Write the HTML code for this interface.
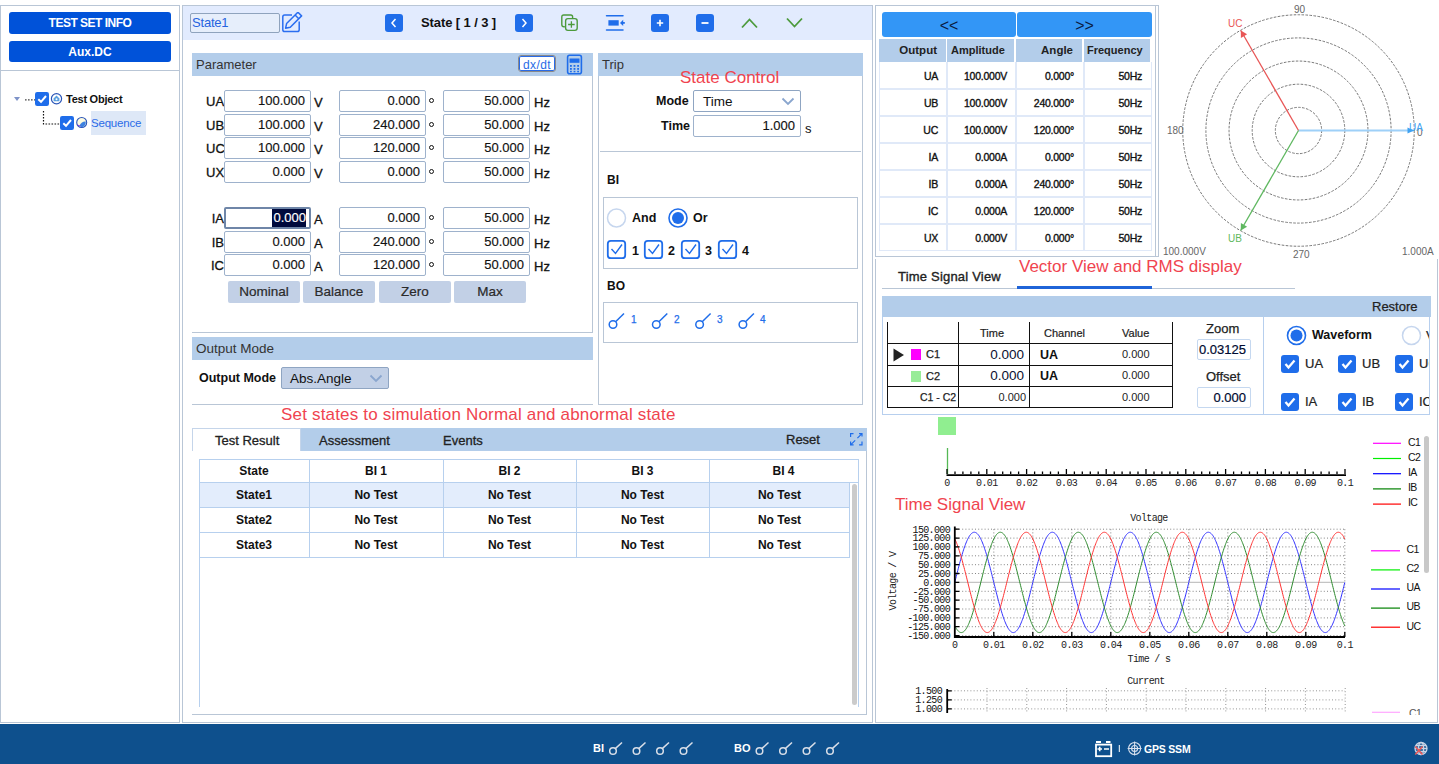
<!DOCTYPE html>
<html><head><meta charset="utf-8">
<style>
*{box-sizing:border-box;margin:0;padding:0}
html,body{width:1439px;height:764px;overflow:hidden;background:#fff}
body{position:relative;font-family:"Liberation Sans",sans-serif;color:#111;font-size:13px}
.a{position:absolute}
.t{position:absolute;white-space:nowrap;line-height:1}
.b{font-weight:bold}
.bd{position:absolute;border:1px solid #B9C6D6}
.hdr{position:absolute;background:#B3CDEA;}
.inp{position:absolute;background:#fff;border:1px solid #9EB2CC;border-radius:2px;text-align:right;white-space:nowrap;line-height:19px;padding-right:5px;font-size:13px;-webkit-text-stroke:0.15px}
.btnb{position:absolute;background:#0052D9;border-radius:3px;color:#fff;font-weight:bold;text-align:center;font-size:12px}
.red{position:absolute;white-space:nowrap;line-height:1;color:#F0444F;font-size:17px}
.sq{position:absolute;border-radius:3px}
</style></head><body>
<!-- LEFT PANEL -->
<div class="bd" style="left:0;top:5px;width:180px;height:718px"></div>
<div class="btnb" style="left:9px;top:12px;width:162px;height:22px;line-height:22px;letter-spacing:-0.5px">TEST SET INFO</div>
<div class="btnb" style="left:9px;top:41px;width:162px;height:21px;line-height:23px">Aux.DC</div>
<div class="a" style="left:1px;top:70px;width:178px;height:1px;background:#B9C6D6"></div>
<!-- tree -->
<svg class="a" style="left:0;top:85px" width="180" height="55">
 <path d="M14 12 L20 12 L17 16 Z" fill="#7E93C8"/>
 <path d="M25 14.8 H35" stroke="#444" stroke-width="1.3" stroke-dasharray="1.6,1.4"/>
 <path d="M43.5 26 V39 H60" stroke="#111" stroke-width="1.2" fill="none" stroke-dasharray="1.6,1.4"/>
 <rect x="35" y="7" width="14" height="14" rx="2.2" fill="#1F6DEA"/>
 <path d="M38.3 14.2 L41 16.8 L46 11" stroke="#fff" stroke-width="2" fill="none"/>
 <circle cx="56.5" cy="13.7" r="5.1" fill="#fff" stroke="#2A55B8" stroke-width="1.2"/>
 <path d="M53.6 16.3 V13.4 L56.5 10.6 L59.4 13.4 V16.3 Z" fill="#5AA0E0"/>
 <circle cx="56.5" cy="14.2" r="1" fill="#fff"/>
 <rect x="60" y="31" width="14" height="14" rx="2.2" fill="#1F6DEA"/>
 <path d="M63.3 38.2 L66 40.8 L71 35" stroke="#fff" stroke-width="2" fill="none"/>
 <circle cx="81.7" cy="37.5" r="5" fill="#FDFBE0" stroke="#2A55B8" stroke-width="1.1"/>
 <path d="M79.5 40.5 Q82 36 85.8 36.5 Q86 41 82 42.3 Q80.5 42 79.5 40.5Z" fill="#3D82E0"/>
 <path d="M77.5 39.8 Q79 41 80.5 41.2" stroke="#8040E0" stroke-width="1" fill="none"/>
</svg>
<div class="t b" style="left:66px;top:94px;font-size:11px;letter-spacing:-0.25px;color:#111">Test Object</div>
<div class="a" style="left:91px;top:111px;width:55px;height:24px;background:#DEE8F7"></div>
<div class="t" style="left:91px;top:118px;font-size:11.5px;letter-spacing:-0.2px;color:#2B6BE8">Sequence</div>
<!-- MIDDLE PANEL -->
<div class="bd" style="left:182px;top:5px;width:691px;height:718px"></div>
<div class="a" style="left:183px;top:6px;width:689px;height:34px;background:#E2EBFE"></div>
<div class="a" style="left:190px;top:13px;width:90px;height:20px;border:1px solid #8FA3BD;border-radius:2px;background:#E6EEFB"></div>
<div class="t" style="left:192px;top:16px;font-size:13px;color:#2563E0;letter-spacing:-0.2px">State1</div>
<svg class="a" style="left:282px;top:12px" width="22" height="22">
 <path d="M10 3.1 H2.6 Q0.8 3.1 0.8 4.9 V17.8 Q0.8 19.6 2.6 19.6 H15.4 Q17.2 19.6 17.2 17.8 V9.6" fill="none" stroke="#2A6EF0" stroke-width="1.5"/>
 <g transform="translate(3.6,16.2) rotate(-45)" fill="none" stroke="#2A6EF0" stroke-width="1.5" stroke-linejoin="round">
  <path d="M0 0 L4 -2.6 H20 V2.6 H4 Z"/><path d="M16 -2.6 V2.6"/>
 </g>
</svg>
<!-- nav -->
<div class="sq" style="left:385px;top:14px;width:18px;height:18px;background:#1F6DEA"></div>
<svg class="a" style="left:385px;top:14px" width="18" height="18"><path d="M10.5 5 L7 9 L10.5 13" stroke="#fff" stroke-width="1.5" fill="none"/></svg>
<div class="t b" style="left:421px;top:16px;font-size:13px;color:#111;letter-spacing:-0.1px">State [ 1 / 3 ]</div>
<div class="sq" style="left:515px;top:14px;width:18px;height:18px;background:#1F6DEA"></div>
<svg class="a" style="left:515px;top:14px" width="18" height="18"><path d="M7.5 5 L11 9 L7.5 13" stroke="#fff" stroke-width="1.5" fill="none"/></svg>
<svg class="a" style="left:559px;top:13px" width="22" height="20">
 <path d="M5.8 13.7 H5 Q2.8 13.7 2.8 11.5 V4 Q2.8 2 4.8 2 H11.8 Q13.6 2 13.6 3.8 V5" fill="none" stroke="#4C9A3C" stroke-width="1.4"/>
 <rect x="6.6" y="5.6" width="11.6" height="11.8" rx="2.3" fill="none" stroke="#4C9A3C" stroke-width="1.4"/>
 <path d="M12.4 8.2 V14.8 M9.1 11.5 H15.7" stroke="#4C9A3C" stroke-width="1.3"/>
</svg>
<svg class="a" style="left:605px;top:14px" width="22" height="18">
 <path d="M1.5 1.7 H18 M1.5 15.9 H18" stroke="#1F6DEA" stroke-width="1.5" stroke-linecap="round"/>
 <rect x="3.4" y="6.2" width="10.3" height="5.4" fill="#1F6DEA"/>
 <path d="M15 8.9 L18.2 5.8 V12 Z" fill="#1F6DEA"/><path d="M17 8.9 H19.8" stroke="#1F6DEA" stroke-width="1.8"/>
</svg>
<div class="sq" style="left:651px;top:14px;width:18px;height:18px;background:#1F6DEA"></div>
<svg class="a" style="left:651px;top:14px" width="18" height="18"><path d="M9 5.8 V12.2 M5.8 9 H12.2" stroke="#fff" stroke-width="1.6"/></svg>
<div class="sq" style="left:696px;top:14px;width:18px;height:18px;background:#1F6DEA"></div>
<svg class="a" style="left:696px;top:14px" width="18" height="18"><path d="M5.5 9 H12.5" stroke="#fff" stroke-width="1.8"/></svg>
<svg class="a" style="left:740px;top:16px" width="20" height="14"><path d="M2 11.5 L9.5 3.5 L17 11.5" stroke="#4C9A3C" stroke-width="1.8" fill="none"/></svg>
<svg class="a" style="left:785px;top:16px" width="20" height="14"><path d="M2 2.5 L9.5 10.5 L17 2.5" stroke="#4C9A3C" stroke-width="1.8" fill="none"/></svg>

<!-- Parameter panel -->
<div class="hdr" style="left:192px;top:53px;width:401px;height:23px"></div>
<div class="t" style="left:196px;top:58px;font-size:13px;color:#333">Parameter</div>
<div class="a" style="left:518px;top:55px;width:38px;height:17px;border:1.5px solid #8A8A8A;border-radius:3px;background:#fff;box-shadow:inset 0 0 0 1px #2A6BE6"></div>
<div class="t" style="left:523px;top:59px;font-size:12px;letter-spacing:0.4px;color:#2A6BE6">dx/dt</div>
<svg class="a" style="left:566px;top:54px" width="17" height="21">
 <rect x="1.6" y="1.2" width="13.8" height="18.6" rx="2" fill="none" stroke="#1F6DEA" stroke-width="1.6"/>
 <rect x="3.5" y="4.5" width="10" height="4.3" fill="#1F6DEA"/>
 <g fill="#1F6DEA"><rect x="4" y="11" width="1.8" height="1.8"/><rect x="7.6" y="11" width="1.8" height="1.8"/><rect x="11.2" y="11" width="1.8" height="1.8"/>
 <rect x="4" y="14" width="1.8" height="1.8"/><rect x="7.6" y="14" width="1.8" height="1.8"/><rect x="11.2" y="14" width="1.8" height="1.8"/>
 <rect x="4" y="16.8" width="1.8" height="1.5"/><rect x="7.6" y="16.8" width="1.8" height="1.5"/><rect x="11.2" y="16.8" width="1.8" height="1.5"/></g>
</svg>
<div class="a" style="left:592px;top:76px;width:1px;height:257px;background:#B9C6D6"></div>
<div class="a" style="left:192px;top:332px;width:401px;height:1px;background:#B9C6D6"></div>
<div class="t" style="left:206px;top:95px;width:18px;text-align:right;font-size:13px;-webkit-text-stroke:0.3px">UA</div>
<div class="inp" style="left:224px;top:90px;width:87px;height:22px">100.000</div>
<div class="t" style="left:314px;top:96px;font-size:13px;-webkit-text-stroke:0.3px">V</div>
<div class="inp" style="left:339px;top:90px;width:87px;height:22px">0.000</div>
<div class="a" style="left:429px;top:98px;width:5px;height:5px;border:1.7px solid #111;border-radius:50%"></div>
<div class="inp" style="left:443px;top:90px;width:87px;height:22px">50.000</div>
<div class="t" style="left:534px;top:96px;font-size:13px;-webkit-text-stroke:0.3px">Hz</div>
<div class="t" style="left:206px;top:119px;width:18px;text-align:right;font-size:13px;-webkit-text-stroke:0.3px">UB</div>
<div class="inp" style="left:224px;top:114px;width:87px;height:22px">100.000</div>
<div class="t" style="left:314px;top:120px;font-size:13px;-webkit-text-stroke:0.3px">V</div>
<div class="inp" style="left:339px;top:114px;width:87px;height:22px">240.000</div>
<div class="a" style="left:429px;top:122px;width:5px;height:5px;border:1.7px solid #111;border-radius:50%"></div>
<div class="inp" style="left:443px;top:114px;width:87px;height:22px">50.000</div>
<div class="t" style="left:534px;top:120px;font-size:13px;-webkit-text-stroke:0.3px">Hz</div>
<div class="t" style="left:206px;top:142px;width:18px;text-align:right;font-size:13px;-webkit-text-stroke:0.3px">UC</div>
<div class="inp" style="left:224px;top:137px;width:87px;height:22px">100.000</div>
<div class="t" style="left:314px;top:143px;font-size:13px;-webkit-text-stroke:0.3px">V</div>
<div class="inp" style="left:339px;top:137px;width:87px;height:22px">120.000</div>
<div class="a" style="left:429px;top:145px;width:5px;height:5px;border:1.7px solid #111;border-radius:50%"></div>
<div class="inp" style="left:443px;top:137px;width:87px;height:22px">50.000</div>
<div class="t" style="left:534px;top:143px;font-size:13px;-webkit-text-stroke:0.3px">Hz</div>
<div class="t" style="left:206px;top:166px;width:18px;text-align:right;font-size:13px;-webkit-text-stroke:0.3px">UX</div>
<div class="inp" style="left:224px;top:161px;width:87px;height:22px">0.000</div>
<div class="t" style="left:314px;top:167px;font-size:13px;-webkit-text-stroke:0.3px">V</div>
<div class="inp" style="left:339px;top:161px;width:87px;height:22px">0.000</div>
<div class="a" style="left:429px;top:169px;width:5px;height:5px;border:1.7px solid #111;border-radius:50%"></div>
<div class="inp" style="left:443px;top:161px;width:87px;height:22px">50.000</div>
<div class="t" style="left:534px;top:167px;font-size:13px;-webkit-text-stroke:0.3px">Hz</div>
<div class="t" style="left:211px;top:212px;width:13px;text-align:right;font-size:13px;-webkit-text-stroke:0.3px">IA</div>
<div class="inp" style="left:224px;top:207px;width:87px;height:22px;border:2px solid #6F86A8;line-height:18px;padding-right:3px"><span style="background:#000A3C;color:#fff;padding:1px 0 2px 1px">0.000</span></div>
<div class="t" style="left:314px;top:213px;font-size:13px;-webkit-text-stroke:0.3px">A</div>
<div class="inp" style="left:339px;top:207px;width:87px;height:22px">0.000</div>
<div class="a" style="left:429px;top:215px;width:5px;height:5px;border:1.7px solid #111;border-radius:50%"></div>
<div class="inp" style="left:443px;top:207px;width:87px;height:22px">50.000</div>
<div class="t" style="left:534px;top:213px;font-size:13px;-webkit-text-stroke:0.3px">Hz</div>
<div class="t" style="left:211px;top:236px;width:13px;text-align:right;font-size:13px;-webkit-text-stroke:0.3px">IB</div>
<div class="inp" style="left:224px;top:231px;width:87px;height:22px">0.000</div>
<div class="t" style="left:314px;top:237px;font-size:13px;-webkit-text-stroke:0.3px">A</div>
<div class="inp" style="left:339px;top:231px;width:87px;height:22px">240.000</div>
<div class="a" style="left:429px;top:239px;width:5px;height:5px;border:1.7px solid #111;border-radius:50%"></div>
<div class="inp" style="left:443px;top:231px;width:87px;height:22px">50.000</div>
<div class="t" style="left:534px;top:237px;font-size:13px;-webkit-text-stroke:0.3px">Hz</div>
<div class="t" style="left:211px;top:259px;width:13px;text-align:right;font-size:13px;-webkit-text-stroke:0.3px">IC</div>
<div class="inp" style="left:224px;top:254px;width:87px;height:22px">0.000</div>
<div class="t" style="left:314px;top:260px;font-size:13px;-webkit-text-stroke:0.3px">A</div>
<div class="inp" style="left:339px;top:254px;width:87px;height:22px">120.000</div>
<div class="a" style="left:429px;top:262px;width:5px;height:5px;border:1.7px solid #111;border-radius:50%"></div>
<div class="inp" style="left:443px;top:254px;width:87px;height:22px">50.000</div>
<div class="t" style="left:534px;top:260px;font-size:13px;-webkit-text-stroke:0.3px">Hz</div>
<div class="a" style="left:228px;top:281px;width:72px;height:22px;background:#C2D0E6;border-radius:2px;text-align:center;line-height:22px;font-size:13.5px;color:#2a2a2a;-webkit-text-stroke:0.2px">Nominal</div>
<div class="a" style="left:303px;top:281px;width:72px;height:22px;background:#C2D0E6;border-radius:2px;text-align:center;line-height:22px;font-size:13.5px;color:#2a2a2a;-webkit-text-stroke:0.2px">Balance</div>
<div class="a" style="left:379px;top:281px;width:72px;height:22px;background:#C2D0E6;border-radius:2px;text-align:center;line-height:22px;font-size:13.5px;color:#2a2a2a;-webkit-text-stroke:0.2px">Zero</div>
<div class="a" style="left:454px;top:281px;width:72px;height:22px;background:#C2D0E6;border-radius:2px;text-align:center;line-height:22px;font-size:13.5px;color:#2a2a2a;-webkit-text-stroke:0.2px">Max</div>
<div class="hdr" style="left:192px;top:337px;width:401px;height:23px"></div>
<div class="t" style="left:196px;top:342px;font-size:13.5px;color:#333">Output Mode</div>
<div class="t b" style="left:199px;top:372px;font-size:12.5px">Output Mode</div>
<div class="a" style="left:281px;top:367px;width:108px;height:22px;background:#C2D0E6;border:1px solid #8FA5C2;border-radius:2px"></div>
<div class="t" style="left:290px;top:372px;font-size:13.5px;color:#111">Abs.Angle</div>
<svg class="a" style="left:369px;top:373px" width="14" height="10"><path d="M1.5 2.5 L7 8 L12.5 2.5" stroke="#8AA6CE" stroke-width="1.8" fill="none"/></svg>
<div class="a" style="left:192px;top:404px;width:401px;height:1px;background:#B9C6D6"></div>
<!-- Trip -->
<div class="hdr" style="left:598px;top:53px;width:265px;height:23px"></div>
<div class="t" style="left:602px;top:58px;font-size:13px;color:#333">Trip</div>
<div class="a" style="left:598px;top:76px;width:1px;height:329px;background:#B9C6D6"></div>
<div class="a" style="left:862px;top:76px;width:1px;height:329px;background:#B9C6D6"></div>
<div class="a" style="left:598px;top:404px;width:265px;height:1px;background:#B9C6D6"></div>
<div class="red" style="left:680px;top:69px">State Control</div>
<div class="t b" style="left:656px;top:95px;font-size:12.5px">Mode</div>
<div class="a" style="left:693px;top:90px;width:108px;height:22px;border:1px solid #8FA5C2;border-radius:2px;background:#fff"></div>
<div class="t" style="left:703px;top:95px;font-size:13.5px">Time</div>
<svg class="a" style="left:781px;top:96px" width="14" height="10"><path d="M1.5 2.5 L7 8 L12.5 2.5" stroke="#8AA6CE" stroke-width="1.8" fill="none"/></svg>
<div class="t b" style="left:661px;top:120px;font-size:12.5px">Time</div>
<div class="inp" style="left:693px;top:115px;width:108px;height:22px">1.000</div>
<div class="t" style="left:805px;top:122px;font-size:13px">s</div>
<div class="a" style="left:600px;top:151px;width:261px;height:1px;background:#B9C6D6"></div>
<div class="t b" style="left:607px;top:174px;font-size:12px">BI</div>
<div class="a" style="left:603px;top:197px;width:255px;height:72px;border:1px solid #B9C6D6"></div>
<svg class="a" style="left:603px;top:197px" width="255" height="72">
 <circle cx="13.5" cy="21" r="9" fill="#fff" stroke="#C6D6EE" stroke-width="1.5"/>
 <circle cx="75" cy="21" r="9" fill="#fff" stroke="#1F6DEA" stroke-width="1.6"/>
 <circle cx="75" cy="21" r="6" fill="#1F6DEA"/>
 <g fill="none" stroke="#1F6DEA" stroke-width="1.8">
  <rect x="4.8" y="43.8" width="17.4" height="17.4" rx="3"/>
  <rect x="41.8" y="43.8" width="17.4" height="17.4" rx="3"/>
  <rect x="78.8" y="43.8" width="17.4" height="17.4" rx="3"/>
  <rect x="115.8" y="43.8" width="17.4" height="17.4" rx="3"/>
 </g>
 <g fill="none" stroke="#1F6DEA" stroke-width="1.4">
  <path d="M8.5 52 L12.5 56.5 L19 47.5"/>
  <path d="M45.5 52 L49.5 56.5 L56 47.5"/>
  <path d="M82.5 52 L86.5 56.5 L93 47.5"/>
  <path d="M119.5 52 L123.5 56.5 L130 47.5"/>
 </g>
</svg>
<div class="t b" style="left:632px;top:212px;font-size:12.5px">And</div>
<div class="t b" style="left:693px;top:212px;font-size:12.5px">Or</div>
<div class="t b" style="left:632px;top:245px;font-size:12.5px">1</div>
<div class="t b" style="left:668px;top:245px;font-size:12.5px">2</div>
<div class="t b" style="left:705px;top:245px;font-size:12.5px">3</div>
<div class="t b" style="left:742px;top:245px;font-size:12.5px">4</div>
<div class="t b" style="left:607px;top:280px;font-size:12px">BO</div>
<div class="a" style="left:603px;top:302px;width:255px;height:41px;border:1px solid #B9C6D6"></div>
<svg class="a" style="left:603px;top:302px" width="160" height="41">
 <g fill="none" stroke="#1F6DEA" stroke-width="1.5">
  <circle cx="10" cy="22.5" r="3.8"/><path d="M12.6 19.7 L21 11.5"/>
  <circle cx="53.3" cy="22.5" r="3.8"/><path d="M55.9 19.7 L64.3 11.5"/>
  <circle cx="96.6" cy="22.5" r="3.8"/><path d="M99.2 19.7 L107.6 11.5"/>
  <circle cx="139.9" cy="22.5" r="3.8"/><path d="M142.5 19.7 L150.9 11.5"/>
 </g>
</svg>
<div class="t" style="left:631px;top:315px;font-size:10px;color:#1F6DEA;-webkit-text-stroke:0.25px">1</div>
<div class="t" style="left:674px;top:315px;font-size:10px;color:#1F6DEA;-webkit-text-stroke:0.25px">2</div>
<div class="t" style="left:717px;top:315px;font-size:10px;color:#1F6DEA;-webkit-text-stroke:0.25px">3</div>
<div class="t" style="left:760px;top:315px;font-size:10px;color:#1F6DEA;-webkit-text-stroke:0.25px">4</div>
<div class="red" style="left:281px;top:406px;letter-spacing:0.18px">Set states to simulation Normal and abnormal state</div>
<div class="hdr" style="left:192px;top:428px;width:675px;height:23px"></div>
<div class="a" style="left:192px;top:428px;width:109px;height:23px;background:#fff;border:1px solid #C5D5EA;border-bottom:none"></div>
<div class="t" style="left:215px;top:434px;font-size:13px;color:#222;-webkit-text-stroke:0.3px">Test Result</div>
<div class="t" style="left:319px;top:434px;font-size:13px;color:#222;-webkit-text-stroke:0.3px">Assessment</div>
<div class="t" style="left:443px;top:434px;font-size:13px;color:#222;-webkit-text-stroke:0.3px">Events</div>
<div class="t" style="left:786px;top:433px;font-size:13px;color:#222;-webkit-text-stroke:0.3px">Reset</div>
<svg class="a" style="left:849px;top:432px" width="15" height="15"><g fill="none" stroke="#1F6DEA" stroke-width="1.2">
<path d="M1.6 5 V1.6 H4.5"/><path d="M13 9.6 V12.9 H10.1"/><path d="M1.6 9.6 V12.9 H4.6 M1.6 12.9 L6.2 8.3"/><path d="M10 1.6 H13 V4.6 M13 1.6 L8.4 6.2"/></g></svg>
<div class="a" style="left:866px;top:451px;width:1px;height:264px;background:#B9C6D6"></div>
<div class="a" style="left:192px;top:714px;width:675px;height:1px;background:#B9C6D6"></div>
<div class="a" style="left:200px;top:483px;width:650px;height:24px;background:#E3EDFC"></div>
<div class="a" style="left:199px;top:459px;width:1px;height:248px;background:#B7D0EE"></div>
<div class="a" style="left:199px;top:459px;width:660px;height:1px;background:#B7D0EE"></div>
<div class="a" style="left:858px;top:459px;width:1px;height:248px;background:#B7D0EE"></div>
<div class="a" style="left:199px;top:482px;width:660px;height:1px;background:#B7D0EE"></div>
<div class="a" style="left:199px;top:507px;width:651px;height:1px;background:#B7D0EE"></div>
<div class="a" style="left:199px;top:532px;width:651px;height:1px;background:#B7D0EE"></div>
<div class="a" style="left:199px;top:557px;width:651px;height:1px;background:#B7D0EE"></div>
<div class="a" style="left:309px;top:459px;width:1px;height:99px;background:#B7D0EE"></div>
<div class="a" style="left:443px;top:459px;width:1px;height:99px;background:#B7D0EE"></div>
<div class="a" style="left:576px;top:459px;width:1px;height:99px;background:#B7D0EE"></div>
<div class="a" style="left:709px;top:459px;width:1px;height:99px;background:#B7D0EE"></div>
<div class="a" style="left:852px;top:484px;width:5px;height:221px;background:#CBCBCB;border-radius:3px"></div>
<div class="a" style="left:849px;top:482px;width:1px;height:76px;background:#B7D0EE"></div>
<div class="t b" style="left:199px;width:110px;text-align:center;top:465px;font-size:12px">State</div>
<div class="t b" style="left:309px;width:134px;text-align:center;top:465px;font-size:12px">BI 1</div>
<div class="t b" style="left:443px;width:133px;text-align:center;top:465px;font-size:12px">BI 2</div>
<div class="t b" style="left:576px;width:133px;text-align:center;top:465px;font-size:12px">BI 3</div>
<div class="t b" style="left:709px;width:149px;text-align:center;top:465px;font-size:12px">BI 4</div>
<div class="t b" style="left:199px;width:110px;text-align:center;top:489px;font-size:12px">State1</div>
<div class="t b" style="left:309px;width:134px;text-align:center;top:489px;font-size:12px">No Test</div>
<div class="t b" style="left:443px;width:133px;text-align:center;top:489px;font-size:12px">No Test</div>
<div class="t b" style="left:576px;width:133px;text-align:center;top:489px;font-size:12px">No Test</div>
<div class="t b" style="left:709px;width:141px;text-align:center;top:489px;font-size:12px">No Test</div>
<div class="t b" style="left:199px;width:110px;text-align:center;top:514px;font-size:12px">State2</div>
<div class="t b" style="left:309px;width:134px;text-align:center;top:514px;font-size:12px">No Test</div>
<div class="t b" style="left:443px;width:133px;text-align:center;top:514px;font-size:12px">No Test</div>
<div class="t b" style="left:576px;width:133px;text-align:center;top:514px;font-size:12px">No Test</div>
<div class="t b" style="left:709px;width:141px;text-align:center;top:514px;font-size:12px">No Test</div>
<div class="t b" style="left:199px;width:110px;text-align:center;top:539px;font-size:12px">State3</div>
<div class="t b" style="left:309px;width:134px;text-align:center;top:539px;font-size:12px">No Test</div>
<div class="t b" style="left:443px;width:133px;text-align:center;top:539px;font-size:12px">No Test</div>
<div class="t b" style="left:576px;width:133px;text-align:center;top:539px;font-size:12px">No Test</div>
<div class="t b" style="left:709px;width:141px;text-align:center;top:539px;font-size:12px">No Test</div>
<div class="bd" style="left:875px;top:5px;width:284px;height:252px;border-right:none"></div>
<div class="bd" style="left:875px;top:259px;width:563px;height:464px;border-top:none"></div>
<div class="a" style="left:1155px;top:5px;width:1px;height:251px;background:#B9C6D6"></div>
<div class="a" style="left:1158px;top:5px;width:1px;height:252px;background:#B9C6D6"></div>
<div class="a" style="left:875px;top:256px;width:284px;height:1px;background:#B9C6D6"></div>
<div class="a" style="left:882px;top:12px;width:134px;height:25px;background:#3396F6;border-radius:3px;text-align:center;line-height:27px;font-size:16px;color:#0A1A40">&lt;&lt;</div>
<div class="a" style="left:1017px;top:12px;width:135px;height:25px;background:#3396F6;border-radius:3px;text-align:center;line-height:27px;font-size:16px;color:#0A1A40">&gt;&gt;</div>
<div class="a" style="left:879px;top:39px;width:67px;height:23px;background:#B3CDEA"></div>
<div class="a" style="left:947px;top:39px;width:67px;height:23px;background:#B3CDEA"></div>
<div class="a" style="left:1016px;top:39px;width:66px;height:23px;background:#B3CDEA"></div>
<div class="a" style="left:1084px;top:39px;width:66px;height:23px;background:#B3CDEA"></div>
<div class="t b" style="left:879px;width:58px;text-align:right;top:45px;font-size:11.5px;color:#222">Output</div>
<div class="t b" style="left:951px;top:45px;font-size:11px;color:#222">Amplitude</div>
<div class="t b" style="left:1016px;width:57px;text-align:right;top:45px;font-size:11.5px;color:#222">Angle</div>
<div class="t b" style="left:1087px;top:45px;font-size:11px;color:#222">Frequency</div>
<div class="a" style="left:879px;top:62px;width:273px;height:189px;border:1px solid #E0E9F8;border-top:none"></div>
<div class="a" style="left:946px;top:62px;width:2px;height:189px;background:#E0E9F8"></div>
<div class="a" style="left:1015px;top:62px;width:2px;height:189px;background:#E0E9F8"></div>
<div class="a" style="left:1083px;top:62px;width:2px;height:189px;background:#E0E9F8"></div>
<div class="t" style="left:880px;width:58px;text-align:right;top:71px;font-size:10.5px;letter-spacing:-0.25px;-webkit-text-stroke:0.35px;color:#111">UA</div>
<div class="t" style="left:948px;width:59px;text-align:right;top:71px;font-size:10.5px;letter-spacing:-0.25px;-webkit-text-stroke:0.35px;color:#111">100.000V</div>
<div class="t" style="left:1016px;width:58px;text-align:right;top:71px;font-size:10.5px;letter-spacing:-0.25px;-webkit-text-stroke:0.35px;color:#111">0.000°</div>
<div class="t" style="left:1084px;width:58px;text-align:right;top:71px;font-size:10.5px;letter-spacing:-0.25px;-webkit-text-stroke:0.35px;color:#111">50Hz</div>
<div class="a" style="left:879px;top:88px;width:273px;height:2px;background:#E0E9F8"></div>
<div class="t" style="left:880px;width:58px;text-align:right;top:98px;font-size:10.5px;letter-spacing:-0.25px;-webkit-text-stroke:0.35px;color:#111">UB</div>
<div class="t" style="left:948px;width:59px;text-align:right;top:98px;font-size:10.5px;letter-spacing:-0.25px;-webkit-text-stroke:0.35px;color:#111">100.000V</div>
<div class="t" style="left:1016px;width:58px;text-align:right;top:98px;font-size:10.5px;letter-spacing:-0.25px;-webkit-text-stroke:0.35px;color:#111">240.000°</div>
<div class="t" style="left:1084px;width:58px;text-align:right;top:98px;font-size:10.5px;letter-spacing:-0.25px;-webkit-text-stroke:0.35px;color:#111">50Hz</div>
<div class="a" style="left:879px;top:115px;width:273px;height:2px;background:#E0E9F8"></div>
<div class="t" style="left:880px;width:58px;text-align:right;top:125px;font-size:10.5px;letter-spacing:-0.25px;-webkit-text-stroke:0.35px;color:#111">UC</div>
<div class="t" style="left:948px;width:59px;text-align:right;top:125px;font-size:10.5px;letter-spacing:-0.25px;-webkit-text-stroke:0.35px;color:#111">100.000V</div>
<div class="t" style="left:1016px;width:58px;text-align:right;top:125px;font-size:10.5px;letter-spacing:-0.25px;-webkit-text-stroke:0.35px;color:#111">120.000°</div>
<div class="t" style="left:1084px;width:58px;text-align:right;top:125px;font-size:10.5px;letter-spacing:-0.25px;-webkit-text-stroke:0.35px;color:#111">50Hz</div>
<div class="a" style="left:879px;top:142px;width:273px;height:2px;background:#E0E9F8"></div>
<div class="t" style="left:880px;width:58px;text-align:right;top:152px;font-size:10.5px;letter-spacing:-0.25px;-webkit-text-stroke:0.35px;color:#111">IA</div>
<div class="t" style="left:948px;width:59px;text-align:right;top:152px;font-size:10.5px;letter-spacing:-0.25px;-webkit-text-stroke:0.35px;color:#111">0.000A</div>
<div class="t" style="left:1016px;width:58px;text-align:right;top:152px;font-size:10.5px;letter-spacing:-0.25px;-webkit-text-stroke:0.35px;color:#111">0.000°</div>
<div class="t" style="left:1084px;width:58px;text-align:right;top:152px;font-size:10.5px;letter-spacing:-0.25px;-webkit-text-stroke:0.35px;color:#111">50Hz</div>
<div class="a" style="left:879px;top:169px;width:273px;height:2px;background:#E0E9F8"></div>
<div class="t" style="left:880px;width:58px;text-align:right;top:179px;font-size:10.5px;letter-spacing:-0.25px;-webkit-text-stroke:0.35px;color:#111">IB</div>
<div class="t" style="left:948px;width:59px;text-align:right;top:179px;font-size:10.5px;letter-spacing:-0.25px;-webkit-text-stroke:0.35px;color:#111">0.000A</div>
<div class="t" style="left:1016px;width:58px;text-align:right;top:179px;font-size:10.5px;letter-spacing:-0.25px;-webkit-text-stroke:0.35px;color:#111">240.000°</div>
<div class="t" style="left:1084px;width:58px;text-align:right;top:179px;font-size:10.5px;letter-spacing:-0.25px;-webkit-text-stroke:0.35px;color:#111">50Hz</div>
<div class="a" style="left:879px;top:196px;width:273px;height:2px;background:#E0E9F8"></div>
<div class="t" style="left:880px;width:58px;text-align:right;top:206px;font-size:10.5px;letter-spacing:-0.25px;-webkit-text-stroke:0.35px;color:#111">IC</div>
<div class="t" style="left:948px;width:59px;text-align:right;top:206px;font-size:10.5px;letter-spacing:-0.25px;-webkit-text-stroke:0.35px;color:#111">0.000A</div>
<div class="t" style="left:1016px;width:58px;text-align:right;top:206px;font-size:10.5px;letter-spacing:-0.25px;-webkit-text-stroke:0.35px;color:#111">120.000°</div>
<div class="t" style="left:1084px;width:58px;text-align:right;top:206px;font-size:10.5px;letter-spacing:-0.25px;-webkit-text-stroke:0.35px;color:#111">50Hz</div>
<div class="a" style="left:879px;top:223px;width:273px;height:2px;background:#E0E9F8"></div>
<div class="t" style="left:880px;width:58px;text-align:right;top:233px;font-size:10.5px;letter-spacing:-0.25px;-webkit-text-stroke:0.35px;color:#111">UX</div>
<div class="t" style="left:948px;width:59px;text-align:right;top:233px;font-size:10.5px;letter-spacing:-0.25px;-webkit-text-stroke:0.35px;color:#111">0.000V</div>
<div class="t" style="left:1016px;width:58px;text-align:right;top:233px;font-size:10.5px;letter-spacing:-0.25px;-webkit-text-stroke:0.35px;color:#111">0.000°</div>
<div class="t" style="left:1084px;width:58px;text-align:right;top:233px;font-size:10.5px;letter-spacing:-0.25px;-webkit-text-stroke:0.35px;color:#111">50Hz</div>
<svg class="a" style="left:1159px;top:0" width="280" height="260">
<circle cx="139.5" cy="130.5" r="23.15" fill="none" stroke="#606060" stroke-width="0.85" stroke-dasharray="2.6,1.4"/>
<circle cx="139.5" cy="130.5" r="46.3" fill="none" stroke="#606060" stroke-width="0.85" stroke-dasharray="2.6,1.4"/>
<circle cx="139.5" cy="130.5" r="69.44999999999999" fill="none" stroke="#606060" stroke-width="0.85" stroke-dasharray="2.6,1.4"/>
<circle cx="139.5" cy="130.5" r="92.6" fill="none" stroke="#606060" stroke-width="0.85" stroke-dasharray="2.6,1.4"/>
<circle cx="139.5" cy="130.5" r="115.75" fill="none" stroke="#606060" stroke-width="0.85" stroke-dasharray="2.6,1.4"/>
<path d="M139.5 130.5 L255.0 130.5" stroke="#9ED0F8" stroke-width="2.2"/><path d="M255.0 130.5 L248.5 127.5 L248.5 133.5 Z" fill="#3FA2F2"/>
<path d="M139.5 130.5 L81.8 30.5" stroke="#E85656" stroke-width="1.3"/><path d="M81.8 30.5 L81.9 37.9 L88.1 34.3 Z" fill="#E85656"/>
<path d="M139.5 130.5 L81.7 230.5" stroke="#5FB860" stroke-width="1.3"/><path d="M81.7 230.5 L88.1 226.7 L81.9 223.1 Z" fill="#5FB860"/>
</svg>
<div class="t" style="left:1294px;top:5px;font-size:10px;color:#666">90</div>
<div class="t" style="left:1167px;top:126px;font-size:10px;color:#666">180</div>
<div class="t" style="left:1417px;top:128px;font-size:10px;color:#666">0</div>
<div class="t" style="left:1293px;top:250px;font-size:10px;color:#666">270</div>
<div class="t" style="left:1163px;top:247px;font-size:10px;color:#666">100.000V</div>
<div class="t" style="left:1402px;top:247px;font-size:10px;color:#666">1.000A</div>
<div class="t" style="left:1228px;top:19px;font-size:10px;color:#E85656">UC</div>
<div class="t" style="left:1228px;top:234px;font-size:10px;color:#5FB860">UB</div>
<div class="t" style="left:1409px;top:123px;font-size:10px;color:#44A4F2">UA</div>
<div class="red" style="left:1019px;top:258px">Vector View and RMS display</div>
<div class="t" style="left:898px;top:270px;font-size:13px;color:#222;-webkit-text-stroke:0.35px;letter-spacing:0.2px">Time Signal View</div>
<div class="a" style="left:882px;top:288px;width:413px;height:1px;background:#B9C6D6"></div>
<div class="a" style="left:1017px;top:286px;width:135px;height:3px;background:#1F64D8"></div>
<div class="a" style="left:882px;top:296px;width:549px;height:21px;background:#B3CDEA"></div>
<div class="t" style="left:1372px;top:300px;font-size:13px;color:#222;-webkit-text-stroke:0.25px">Restore</div>
<div class="a" style="left:882px;top:317px;width:548px;height:98px;border:1px solid #B7CFEE;border-top:none"></div>
<div class="a" style="left:1263px;top:317px;width:1px;height:97px;background:#B7CFEE"></div>
<div class="a" style="left:887px;top:322px;width:1px;height:86px;background:#111"></div>
<div class="a" style="left:1172px;top:322px;width:1px;height:86px;background:#111"></div>
<div class="a" style="left:958px;top:322px;width:1px;height:86px;background:#111"></div>
<div class="a" style="left:1029px;top:322px;width:1px;height:86px;background:#111"></div>
<div class="a" style="left:887px;top:343px;width:286px;height:1px;background:#111"></div>
<div class="a" style="left:887px;top:365px;width:286px;height:1px;background:#111"></div>
<div class="a" style="left:887px;top:386px;width:286px;height:1px;background:#111"></div>
<div class="a" style="left:887px;top:407px;width:286px;height:1px;background:#111"></div>
<div class="t" style="left:980px;top:328px;font-size:11px;color:#222;-webkit-text-stroke:0.2px">Time</div>
<div class="t" style="left:1044px;top:328px;font-size:11px;color:#222;-webkit-text-stroke:0.2px">Channel</div>
<div class="t" style="left:1122px;top:328px;font-size:11px;color:#222;-webkit-text-stroke:0.2px">Value</div>
<svg class="a" style="left:893px;top:348px" width="12" height="14"><path d="M0.5 0.5 L11 7 L0.5 13.5Z" fill="#222"/></svg>
<div class="a" style="left:911px;top:349px;width:10px;height:11px;background:#FF00FF"></div>
<div class="a" style="left:911px;top:371px;width:10px;height:11px;background:#98EC98"></div>
<div class="t" style="left:926px;top:349px;font-size:11px;color:#222;-webkit-text-stroke:0.25px">C1</div>
<div class="t" style="left:926px;top:371px;font-size:11px;color:#222;-webkit-text-stroke:0.25px">C2</div>
<div class="t" style="left:920px;top:392px;font-size:10.5px;color:#222;-webkit-text-stroke:0.25px">C1 - C2</div>
<div class="t" style="left:958px;width:66px;text-align:right;top:348px;font-size:13.5px;color:#0A1030">0.000</div>
<div class="t" style="left:958px;width:66px;text-align:right;top:369px;font-size:13.5px;color:#0A1030">0.000</div>
<div class="t" style="left:958px;width:68px;text-align:right;top:392px;font-size:11px;color:#222">0.000</div>
<div class="t b" style="left:1040px;top:349px;font-size:12.5px">UA</div>
<div class="t b" style="left:1040px;top:370px;font-size:12.5px">UA</div>
<div class="t" style="left:1122px;top:349px;font-size:11px;color:#222">0.000</div>
<div class="t" style="left:1122px;top:370px;font-size:11px;color:#222">0.000</div>
<div class="t" style="left:1122px;top:392px;font-size:11px;color:#222">0.000</div>
<div class="t" style="left:1206px;top:322px;font-size:13px;color:#222;-webkit-text-stroke:0.25px">Zoom</div>
<div class="a" style="left:1197px;top:339px;width:54px;height:21px;border:1px solid #C5D8F0;border-radius:2px;background:#fff"></div>
<div class="t" style="left:1199px;top:343px;font-size:13px;color:#000A30;-webkit-text-stroke:0.2px">0.03125</div>
<div class="t" style="left:1206px;top:370px;font-size:13px;color:#222;-webkit-text-stroke:0.25px">Offset</div>
<div class="a" style="left:1197px;top:387px;width:54px;height:21px;border:1px solid #C5D8F0;border-radius:2px;background:#fff"></div>
<div class="t" style="left:1196px;width:50px;text-align:right;top:391px;font-size:13px;color:#000A30;-webkit-text-stroke:0.2px">0.000</div>
<svg class="a" style="left:1264px;top:318px" width="166" height="96">
<circle cx="32.5" cy="17.5" r="9" fill="#fff" stroke="#1F6DEA" stroke-width="1.6"/><circle cx="32.5" cy="17.5" r="6" fill="#1F6DEA"/>
<circle cx="147.5" cy="17.5" r="9" fill="#fff" stroke="#C6D6EE" stroke-width="1.5"/>
<g fill="#1F6DEA">
<rect x="17" y="37" width="18" height="18" rx="3"/><rect x="74" y="37" width="18" height="18" rx="3"/><rect x="131" y="37" width="18" height="18" rx="3"/>
<rect x="17" y="75" width="18" height="18" rx="3"/><rect x="74" y="75" width="18" height="18" rx="3"/><rect x="131" y="75" width="18" height="18" rx="3"/>
</g>
<g fill="none" stroke="#fff" stroke-width="2.3">
<path d="M21.5 46 L24.5 49.5 L30.5 42.5"/><path d="M78.5 46 L81.5 49.5 L87.5 42.5"/><path d="M135.5 46 L138.5 49.5 L144.5 42.5"/>
<path d="M21.5 84 L24.5 87.5 L30.5 80.5"/><path d="M78.5 84 L81.5 87.5 L87.5 80.5"/><path d="M135.5 84 L138.5 87.5 L144.5 80.5"/>
</g></svg>
<div class="t b" style="left:1312px;top:329px;font-size:12.5px">Waveform</div>
<div class="a" style="left:1264px;top:317px;width:165px;height:97px;overflow:hidden">
<div class="t" style="left:41px;top:40px;font-size:13px;color:#222;-webkit-text-stroke:0.2px">UA</div>
<div class="t" style="left:98px;top:40px;font-size:13px;color:#222;-webkit-text-stroke:0.2px">UB</div>
<div class="t" style="left:155px;top:40px;font-size:13px;color:#222;-webkit-text-stroke:0.2px">UC</div>
<div class="t" style="left:41px;top:78px;font-size:13px;color:#222;-webkit-text-stroke:0.2px">IA</div>
<div class="t" style="left:98px;top:78px;font-size:13px;color:#222;-webkit-text-stroke:0.2px">IB</div>
<div class="t" style="left:155px;top:78px;font-size:13px;color:#222;-webkit-text-stroke:0.2px">IC</div>
<div class="t" style="left:162px;top:12px;font-size:13px;color:#222;-webkit-text-stroke:0.2px">V</div>
</div>
<svg class="a" style="left:876px;top:415px" width="560" height="300" font-family="Liberation Mono" font-size="10" letter-spacing="-0.65">
<rect x="62" y="2" width="18" height="18" fill="#90EE90"/>
<path d="M71.5 33 V59" stroke="#55B855" stroke-width="1.3"/>
<path d="M70.5 60.10000000000002 H470" stroke="#000" stroke-width="1.6"/>
<path d="M71.0 59 v-5 M79.0 59 v-2.5 M86.9 59 v-2.5 M94.9 59 v-2.5 M102.8 59 v-2.5 M110.8 59 v-5 M118.8 59 v-2.5 M126.7 59 v-2.5 M134.7 59 v-2.5 M142.6 59 v-2.5 M150.6 59 v-5 M158.6 59 v-2.5 M166.5 59 v-2.5 M174.5 59 v-2.5 M182.4 59 v-2.5 M190.4 59 v-5 M198.4 59 v-2.5 M206.3 59 v-2.5 M214.3 59 v-2.5 M222.2 59 v-2.5 M230.2 59 v-5 M238.2 59 v-2.5 M246.1 59 v-2.5 M254.1 59 v-2.5 M262.0 59 v-2.5 M270.0 59 v-5 M278.0 59 v-2.5 M285.9 59 v-2.5 M293.9 59 v-2.5 M301.8 59 v-2.5 M309.8 59 v-5 M317.8 59 v-2.5 M325.7 59 v-2.5 M333.7 59 v-2.5 M341.6 59 v-2.5 M349.6 59 v-5 M357.6 59 v-2.5 M365.5 59 v-2.5 M373.5 59 v-2.5 M381.4 59 v-2.5 M389.4 59 v-5 M397.4 59 v-2.5 M405.3 59 v-2.5 M413.3 59 v-2.5 M421.2 59 v-2.5 M429.2 59 v-5 M437.2 59 v-2.5 M445.1 59 v-2.5 M453.1 59 v-2.5 M461.0 59 v-2.5 M469.0 59 v-5" stroke="#000" stroke-width="1.3"/>
<text x="71.0" y="70.80000000000001" text-anchor="middle" fill="#222">0</text>
<text x="110.8" y="70.80000000000001" text-anchor="middle" fill="#222">0.01</text>
<text x="150.6" y="70.80000000000001" text-anchor="middle" fill="#222">0.02</text>
<text x="190.4" y="70.80000000000001" text-anchor="middle" fill="#222">0.03</text>
<text x="230.2" y="70.80000000000001" text-anchor="middle" fill="#222">0.04</text>
<text x="270.0" y="70.80000000000001" text-anchor="middle" fill="#222">0.05</text>
<text x="309.8" y="70.80000000000001" text-anchor="middle" fill="#222">0.06</text>
<text x="349.6" y="70.80000000000001" text-anchor="middle" fill="#222">0.07</text>
<text x="389.4" y="70.80000000000001" text-anchor="middle" fill="#222">0.08</text>
<text x="429.2" y="70.80000000000001" text-anchor="middle" fill="#222">0.09</text>
<text x="469.0" y="70.80000000000001" text-anchor="middle" fill="#222">0.1</text>
<path d="M497 28.3 H525" stroke="#FF00FF" stroke-width="1.2"/>
<text x="532" y="30.5" font-family="Liberation Sans" font-size="10.5" fill="#111">C1</text>
<path d="M497 43.5 H525" stroke="#00EE00" stroke-width="1.2"/>
<text x="532" y="45.7" font-family="Liberation Sans" font-size="10.5" fill="#111">C2</text>
<path d="M497 58.7 H525" stroke="#0000FF" stroke-width="1.2"/>
<text x="532" y="60.9" font-family="Liberation Sans" font-size="10.5" fill="#111">IA</text>
<path d="M497 73.9 H525" stroke="#008000" stroke-width="1.2"/>
<text x="532" y="76.1" font-family="Liberation Sans" font-size="10.5" fill="#111">IB</text>
<path d="M497 89.1 H525" stroke="#FF0000" stroke-width="1.2"/>
<text x="532" y="91.3" font-family="Liberation Sans" font-size="10.5" fill="#111">IC</text>
<text x="273" y="106" text-anchor="middle" fill="#222">Voltage</text>
<path d="M79.8 220.6 H468.5 M79.8 211.7 H468.5 M79.8 202.9 H468.5 M79.8 194.0 H468.5 M79.8 185.1 H468.5 M79.8 176.3 H468.5 M79.8 158.5 H468.5 M79.8 149.7 H468.5 M79.8 140.8 H468.5 M79.8 131.9 H468.5 M79.8 123.1 H468.5 M79.8 114.2 H468.5" stroke="#777" stroke-width="0.9" stroke-dasharray="1,2.2"/>
<path d="M117.8 114.2 V220.6 M156.8 114.2 V220.6 M195.8 114.2 V220.6 M234.8 114.2 V220.6 M273.8 114.2 V220.6 M312.8 114.2 V220.6 M351.8 114.2 V220.6 M390.8 114.2 V220.6 M429.8 114.2 V220.6 M468.8 114.2 V220.6" stroke="#777" stroke-width="0.9" stroke-dasharray="1,2.2"/>
<path d="M78.79999999999995 167.4 H468.5" stroke="#C4C4C4" stroke-width="1.2"/>
<polyline points="78.80,167.40 79.29,165.43 79.77,163.46 80.26,161.50 80.75,159.55 81.24,157.61 81.72,155.69 82.21,153.79 82.70,151.90 83.19,150.04 83.67,148.21 84.16,146.40 84.65,144.63 85.14,142.89 85.62,141.19 86.11,139.53 86.60,137.92 87.09,136.35 87.57,134.83 88.06,133.35 88.55,131.93 89.04,130.57 89.52,129.26 90.01,128.01 90.50,126.82 90.99,125.70 91.47,124.63 91.96,123.64 92.45,122.71 92.94,121.85 93.42,121.06 93.91,120.34 94.40,119.70 94.89,119.13 95.38,118.63 95.86,118.21 96.35,117.86 96.84,117.59 97.32,117.40 97.81,117.28 98.30,117.24 98.79,117.28 99.27,117.40 99.76,117.59 100.25,117.86 100.74,118.21 101.22,118.63 101.71,119.13 102.20,119.70 102.69,120.34 103.17,121.06 103.66,121.85 104.15,122.71 104.64,123.64 105.12,124.63 105.61,125.70 106.10,126.82 106.59,128.01 107.07,129.26 107.56,130.57 108.05,131.93 108.54,133.35 109.02,134.83 109.51,136.35 110.00,137.92 110.49,139.53 110.97,141.19 111.46,142.89 111.95,144.63 112.44,146.40 112.92,148.21 113.41,150.04 113.90,151.90 114.39,153.79 114.88,155.69 115.36,157.61 115.85,159.55 116.34,161.50 116.82,163.46 117.31,165.43 117.80,167.40 118.29,169.37 118.77,171.34 119.26,173.30 119.75,175.25 120.24,177.19 120.72,179.11 121.21,181.01 121.70,182.90 122.19,184.76 122.67,186.59 123.16,188.40 123.65,190.17 124.14,191.91 124.62,193.61 125.11,195.27 125.60,196.88 126.09,198.45 126.57,199.97 127.06,201.45 127.55,202.87 128.04,204.23 128.52,205.54 129.01,206.79 129.50,207.98 129.99,209.10 130.47,210.17 130.96,211.16 131.45,212.09 131.94,212.95 132.42,213.74 132.91,214.46 133.40,215.10 133.89,215.67 134.38,216.17 134.86,216.59 135.35,216.94 135.84,217.21 136.32,217.40 136.81,217.52 137.30,217.56 137.79,217.52 138.27,217.40 138.76,217.21 139.25,216.94 139.74,216.59 140.22,216.17 140.71,215.67 141.20,215.10 141.69,214.46 142.17,213.74 142.66,212.95 143.15,212.09 143.64,211.16 144.12,210.17 144.61,209.10 145.10,207.98 145.59,206.79 146.07,205.54 146.56,204.23 147.05,202.87 147.54,201.45 148.02,199.97 148.51,198.45 149.00,196.88 149.49,195.27 149.97,193.61 150.46,191.91 150.95,190.17 151.44,188.40 151.92,186.59 152.41,184.76 152.90,182.90 153.39,181.01 153.88,179.11 154.36,177.19 154.85,175.25 155.34,173.30 155.83,171.34 156.31,169.37 156.80,167.40 157.29,165.43 157.77,163.46 158.26,161.50 158.75,159.55 159.24,157.61 159.72,155.69 160.21,153.79 160.70,151.90 161.19,150.04 161.67,148.21 162.16,146.40 162.65,144.63 163.14,142.89 163.62,141.19 164.11,139.53 164.60,137.92 165.09,136.35 165.58,134.83 166.06,133.35 166.55,131.93 167.04,130.57 167.52,129.26 168.01,128.01 168.50,126.82 168.99,125.70 169.47,124.63 169.96,123.64 170.45,122.71 170.94,121.85 171.42,121.06 171.91,120.34 172.40,119.70 172.89,119.13 173.38,118.63 173.86,118.21 174.35,117.86 174.84,117.59 175.33,117.40 175.81,117.28 176.30,117.24 176.79,117.28 177.28,117.40 177.76,117.59 178.25,117.86 178.74,118.21 179.22,118.63 179.71,119.13 180.20,119.70 180.69,120.34 181.17,121.06 181.66,121.85 182.15,122.71 182.64,123.64 183.12,124.63 183.61,125.70 184.10,126.82 184.59,128.01 185.08,129.26 185.56,130.57 186.05,131.93 186.54,133.35 187.03,134.83 187.51,136.35 188.00,137.92 188.49,139.53 188.97,141.19 189.46,142.89 189.95,144.63 190.44,146.40 190.92,148.21 191.41,150.04 191.90,151.90 192.39,153.79 192.88,155.69 193.36,157.61 193.85,159.55 194.34,161.50 194.83,163.46 195.31,165.43 195.80,167.40 196.29,169.37 196.77,171.34 197.26,173.30 197.75,175.25 198.24,177.19 198.72,179.11 199.21,181.01 199.70,182.90 200.19,184.76 200.67,186.59 201.16,188.40 201.65,190.17 202.14,191.91 202.62,193.61 203.11,195.27 203.60,196.88 204.09,198.45 204.58,199.97 205.06,201.45 205.55,202.87 206.04,204.23 206.52,205.54 207.01,206.79 207.50,207.98 207.99,209.10 208.47,210.17 208.96,211.16 209.45,212.09 209.94,212.95 210.42,213.74 210.91,214.46 211.40,215.10 211.89,215.67 212.38,216.17 212.86,216.59 213.35,216.94 213.84,217.21 214.33,217.40 214.81,217.52 215.30,217.56 215.79,217.52 216.28,217.40 216.76,217.21 217.25,216.94 217.74,216.59 218.22,216.17 218.71,215.67 219.20,215.10 219.69,214.46 220.17,213.74 220.66,212.95 221.15,212.09 221.64,211.16 222.12,210.17 222.61,209.10 223.10,207.98 223.59,206.79 224.08,205.54 224.56,204.23 225.05,202.87 225.54,201.45 226.03,199.97 226.51,198.45 227.00,196.88 227.49,195.27 227.97,193.61 228.46,191.91 228.95,190.17 229.44,188.40 229.92,186.59 230.41,184.76 230.90,182.90 231.39,181.01 231.88,179.11 232.36,177.19 232.85,175.25 233.34,173.30 233.83,171.34 234.31,169.37 234.80,167.40 235.29,165.43 235.77,163.46 236.26,161.50 236.75,159.55 237.24,157.61 237.72,155.69 238.21,153.79 238.70,151.90 239.19,150.04 239.67,148.21 240.16,146.40 240.65,144.63 241.14,142.89 241.62,141.19 242.11,139.53 242.60,137.92 243.09,136.35 243.58,134.83 244.06,133.35 244.55,131.93 245.04,130.57 245.53,129.26 246.01,128.01 246.50,126.82 246.99,125.70 247.47,124.63 247.96,123.64 248.45,122.71 248.94,121.85 249.42,121.06 249.91,120.34 250.40,119.70 250.89,119.13 251.38,118.63 251.86,118.21 252.35,117.86 252.84,117.59 253.33,117.40 253.81,117.28 254.30,117.24 254.79,117.28 255.28,117.40 255.76,117.59 256.25,117.86 256.74,118.21 257.22,118.63 257.71,119.13 258.20,119.70 258.69,120.34 259.17,121.06 259.66,121.85 260.15,122.71 260.64,123.64 261.12,124.63 261.61,125.70 262.10,126.82 262.59,128.01 263.08,129.26 263.56,130.57 264.05,131.93 264.54,133.35 265.02,134.83 265.51,136.35 266.00,137.92 266.49,139.53 266.97,141.19 267.46,142.89 267.95,144.63 268.44,146.40 268.92,148.21 269.41,150.04 269.90,151.90 270.39,153.79 270.88,155.69 271.36,157.61 271.85,159.55 272.34,161.50 272.83,163.46 273.31,165.43 273.80,167.40 274.29,169.37 274.78,171.34 275.26,173.30 275.75,175.25 276.24,177.19 276.72,179.11 277.21,181.01 277.70,182.90 278.19,184.76 278.67,186.59 279.16,188.40 279.65,190.17 280.14,191.91 280.62,193.61 281.11,195.27 281.60,196.88 282.09,198.45 282.58,199.97 283.06,201.45 283.55,202.87 284.04,204.23 284.53,205.54 285.01,206.79 285.50,207.98 285.99,209.10 286.47,210.17 286.96,211.16 287.45,212.09 287.94,212.95 288.42,213.74 288.91,214.46 289.40,215.10 289.89,215.67 290.38,216.17 290.86,216.59 291.35,216.94 291.84,217.21 292.33,217.40 292.81,217.52 293.30,217.56 293.79,217.52 294.27,217.40 294.76,217.21 295.25,216.94 295.74,216.59 296.22,216.17 296.71,215.67 297.20,215.10 297.69,214.46 298.17,213.74 298.66,212.95 299.15,212.09 299.64,211.16 300.12,210.17 300.61,209.10 301.10,207.98 301.59,206.79 302.08,205.54 302.56,204.23 303.05,202.87 303.54,201.45 304.03,199.97 304.51,198.45 305.00,196.88 305.49,195.27 305.97,193.61 306.46,191.91 306.95,190.17 307.44,188.40 307.92,186.59 308.41,184.76 308.90,182.90 309.39,181.01 309.88,179.11 310.36,177.19 310.85,175.25 311.34,173.30 311.83,171.34 312.31,169.37 312.80,167.40 313.29,165.43 313.78,163.46 314.26,161.50 314.75,159.55 315.24,157.61 315.72,155.69 316.21,153.79 316.70,151.90 317.19,150.04 317.67,148.21 318.16,146.40 318.65,144.63 319.14,142.89 319.62,141.19 320.11,139.53 320.60,137.92 321.09,136.35 321.58,134.83 322.06,133.35 322.55,131.93 323.04,130.57 323.52,129.26 324.01,128.01 324.50,126.82 324.99,125.70 325.47,124.63 325.96,123.64 326.45,122.71 326.94,121.85 327.42,121.06 327.91,120.34 328.40,119.70 328.89,119.13 329.38,118.63 329.86,118.21 330.35,117.86 330.84,117.59 331.33,117.40 331.81,117.28 332.30,117.24 332.79,117.28 333.27,117.40 333.76,117.59 334.25,117.86 334.74,118.21 335.22,118.63 335.71,119.13 336.20,119.70 336.69,120.34 337.17,121.06 337.66,121.85 338.15,122.71 338.64,123.64 339.12,124.63 339.61,125.70 340.10,126.82 340.59,128.01 341.08,129.26 341.56,130.57 342.05,131.93 342.54,133.35 343.03,134.83 343.51,136.35 344.00,137.92 344.49,139.53 344.97,141.19 345.46,142.89 345.95,144.63 346.44,146.40 346.92,148.21 347.41,150.04 347.90,151.90 348.39,153.79 348.88,155.69 349.36,157.61 349.85,159.55 350.34,161.50 350.82,163.46 351.31,165.43 351.80,167.40 352.29,169.37 352.78,171.34 353.26,173.30 353.75,175.25 354.24,177.19 354.72,179.11 355.21,181.01 355.70,182.90 356.19,184.76 356.67,186.59 357.16,188.40 357.65,190.17 358.14,191.91 358.62,193.61 359.11,195.27 359.60,196.88 360.09,198.45 360.58,199.97 361.06,201.45 361.55,202.87 362.04,204.23 362.53,205.54 363.01,206.79 363.50,207.98 363.99,209.10 364.47,210.17 364.96,211.16 365.45,212.09 365.94,212.95 366.42,213.74 366.91,214.46 367.40,215.10 367.89,215.67 368.38,216.17 368.86,216.59 369.35,216.94 369.84,217.21 370.33,217.40 370.81,217.52 371.30,217.56 371.79,217.52 372.27,217.40 372.76,217.21 373.25,216.94 373.74,216.59 374.22,216.17 374.71,215.67 375.20,215.10 375.69,214.46 376.17,213.74 376.66,212.95 377.15,212.09 377.64,211.16 378.12,210.17 378.61,209.10 379.10,207.98 379.59,206.79 380.07,205.54 380.56,204.23 381.05,202.87 381.54,201.45 382.02,199.97 382.51,198.45 383.00,196.88 383.49,195.27 383.97,193.61 384.46,191.91 384.95,190.17 385.44,188.40 385.92,186.59 386.41,184.76 386.90,182.90 387.39,181.01 387.88,179.11 388.36,177.19 388.85,175.25 389.34,173.30 389.83,171.34 390.31,169.37 390.80,167.40 391.29,165.43 391.78,163.46 392.26,161.50 392.75,159.55 393.24,157.61 393.72,155.69 394.21,153.79 394.70,151.90 395.19,150.04 395.67,148.21 396.16,146.40 396.65,144.63 397.14,142.89 397.62,141.19 398.11,139.53 398.60,137.92 399.09,136.35 399.57,134.83 400.06,133.35 400.55,131.93 401.04,130.57 401.53,129.26 402.01,128.01 402.50,126.82 402.99,125.70 403.47,124.63 403.96,123.64 404.45,122.71 404.94,121.85 405.42,121.06 405.91,120.34 406.40,119.70 406.89,119.13 407.38,118.63 407.86,118.21 408.35,117.86 408.84,117.59 409.32,117.40 409.81,117.28 410.30,117.24 410.79,117.28 411.28,117.40 411.76,117.59 412.25,117.86 412.74,118.21 413.22,118.63 413.71,119.13 414.20,119.70 414.69,120.34 415.17,121.06 415.66,121.85 416.15,122.71 416.64,123.64 417.12,124.63 417.61,125.70 418.10,126.82 418.59,128.01 419.07,129.26 419.56,130.57 420.05,131.93 420.54,133.35 421.03,134.83 421.51,136.35 422.00,137.92 422.49,139.53 422.97,141.19 423.46,142.89 423.95,144.63 424.44,146.40 424.92,148.21 425.41,150.04 425.90,151.90 426.39,153.79 426.88,155.69 427.36,157.61 427.85,159.55 428.34,161.50 428.82,163.46 429.31,165.43 429.80,167.40 430.29,169.37 430.77,171.34 431.26,173.30 431.75,175.25 432.24,177.19 432.72,179.11 433.21,181.01 433.70,182.90 434.19,184.76 434.67,186.59 435.16,188.40 435.65,190.17 436.14,191.91 436.62,193.61 437.11,195.27 437.60,196.88 438.09,198.45 438.57,199.97 439.06,201.45 439.55,202.87 440.04,204.23 440.52,205.54 441.01,206.79 441.50,207.98 441.99,209.10 442.47,210.17 442.96,211.16 443.45,212.09 443.94,212.95 444.42,213.74 444.91,214.46 445.40,215.10 445.89,215.67 446.38,216.17 446.86,216.59 447.35,216.94 447.84,217.21 448.33,217.40 448.81,217.52 449.30,217.56 449.79,217.52 450.28,217.40 450.76,217.21 451.25,216.94 451.74,216.59 452.22,216.17 452.71,215.67 453.20,215.10 453.69,214.46 454.17,213.74 454.66,212.95 455.15,212.09 455.64,211.16 456.12,210.17 456.61,209.10 457.10,207.98 457.59,206.79 458.08,205.54 458.56,204.23 459.05,202.87 459.54,201.45 460.03,199.97 460.51,198.45 461.00,196.88 461.49,195.27 461.97,193.61 462.46,191.91 462.95,190.17 463.44,188.40 463.92,186.59 464.41,184.76 464.90,182.90 465.39,181.01 465.88,179.11 466.36,177.19 466.85,175.25 467.34,173.30 467.83,171.34 468.31,169.37 468.80,167.40" fill="none" stroke="#3333FF" stroke-width="1"/>
<polyline points="78.80,210.84 79.29,211.79 79.77,212.67 80.26,213.48 80.75,214.23 81.24,214.90 81.72,215.49 82.21,216.01 82.70,216.46 83.19,216.83 83.67,217.13 84.16,217.35 84.65,217.49 85.14,217.55 85.62,217.54 86.11,217.45 86.60,217.28 87.09,217.04 87.57,216.72 88.06,216.32 88.55,215.85 89.04,215.30 89.52,214.68 90.01,213.99 90.50,213.22 90.99,212.38 91.47,211.48 91.96,210.51 92.45,209.47 92.94,208.36 93.42,207.19 93.91,205.96 94.40,204.67 94.89,203.33 95.38,201.93 95.86,200.47 96.35,198.96 96.84,197.41 97.32,195.81 97.81,194.16 98.30,192.48 98.79,190.75 99.27,188.99 99.76,187.20 100.25,185.37 100.74,183.52 101.22,181.65 101.71,179.75 102.20,177.83 102.69,175.89 103.17,173.95 103.66,171.99 104.15,170.03 104.64,168.06 105.12,166.09 105.61,164.12 106.10,162.16 106.59,160.20 107.07,158.26 107.56,156.33 108.05,154.42 108.54,152.53 109.02,150.66 109.51,148.81 110.00,147.00 110.49,145.22 110.97,143.47 111.46,141.76 111.95,140.08 112.44,138.45 112.92,136.87 113.41,135.33 113.90,133.84 114.39,132.40 114.88,131.02 115.36,129.69 115.85,128.42 116.34,127.21 116.82,126.06 117.31,124.98 117.80,123.96 118.29,123.01 118.77,122.13 119.26,121.32 119.75,120.57 120.24,119.90 120.72,119.31 121.21,118.79 121.70,118.34 122.19,117.97 122.67,117.67 123.16,117.45 123.65,117.31 124.14,117.25 124.62,117.26 125.11,117.35 125.60,117.52 126.09,117.76 126.57,118.08 127.06,118.48 127.55,118.95 128.04,119.50 128.52,120.12 129.01,120.81 129.50,121.58 129.99,122.42 130.47,123.32 130.96,124.29 131.45,125.33 131.94,126.44 132.42,127.61 132.91,128.84 133.40,130.13 133.89,131.47 134.38,132.87 134.86,134.33 135.35,135.84 135.84,137.39 136.32,138.99 136.81,140.64 137.30,142.32 137.79,144.05 138.27,145.81 138.76,147.60 139.25,149.43 139.74,151.28 140.22,153.15 140.71,155.05 141.20,156.97 141.69,158.91 142.17,160.85 142.66,162.81 143.15,164.77 143.64,166.74 144.12,168.71 144.61,170.68 145.10,172.64 145.59,174.60 146.07,176.54 146.56,178.47 147.05,180.38 147.54,182.27 148.02,184.14 148.51,185.99 149.00,187.80 149.49,189.58 149.97,191.33 150.46,193.04 150.95,194.72 151.44,196.35 151.92,197.93 152.41,199.47 152.90,200.96 153.39,202.40 153.88,203.78 154.36,205.11 154.85,206.38 155.34,207.59 155.83,208.74 156.31,209.82 156.80,210.84 157.29,211.79 157.77,212.67 158.26,213.48 158.75,214.23 159.24,214.90 159.72,215.49 160.21,216.01 160.70,216.46 161.19,216.83 161.67,217.13 162.16,217.35 162.65,217.49 163.14,217.55 163.62,217.54 164.11,217.45 164.60,217.28 165.09,217.04 165.58,216.72 166.06,216.32 166.55,215.85 167.04,215.30 167.52,214.68 168.01,213.99 168.50,213.22 168.99,212.38 169.47,211.48 169.96,210.51 170.45,209.47 170.94,208.36 171.42,207.19 171.91,205.96 172.40,204.67 172.89,203.33 173.38,201.93 173.86,200.47 174.35,198.96 174.84,197.41 175.33,195.81 175.81,194.16 176.30,192.48 176.79,190.75 177.28,188.99 177.76,187.20 178.25,185.37 178.74,183.52 179.22,181.65 179.71,179.75 180.20,177.83 180.69,175.89 181.17,173.95 181.66,171.99 182.15,170.03 182.64,168.06 183.12,166.09 183.61,164.12 184.10,162.16 184.59,160.20 185.08,158.26 185.56,156.33 186.05,154.42 186.54,152.53 187.03,150.66 187.51,148.81 188.00,147.00 188.49,145.22 188.97,143.47 189.46,141.76 189.95,140.08 190.44,138.45 190.92,136.87 191.41,135.33 191.90,133.84 192.39,132.40 192.88,131.02 193.36,129.69 193.85,128.42 194.34,127.21 194.83,126.06 195.31,124.98 195.80,123.96 196.29,123.01 196.77,122.13 197.26,121.32 197.75,120.57 198.24,119.90 198.72,119.31 199.21,118.79 199.70,118.34 200.19,117.97 200.67,117.67 201.16,117.45 201.65,117.31 202.14,117.25 202.62,117.26 203.11,117.35 203.60,117.52 204.09,117.76 204.58,118.08 205.06,118.48 205.55,118.95 206.04,119.50 206.52,120.12 207.01,120.81 207.50,121.58 207.99,122.42 208.47,123.32 208.96,124.29 209.45,125.33 209.94,126.44 210.42,127.61 210.91,128.84 211.40,130.13 211.89,131.47 212.38,132.87 212.86,134.33 213.35,135.84 213.84,137.39 214.33,138.99 214.81,140.64 215.30,142.32 215.79,144.05 216.28,145.81 216.76,147.60 217.25,149.43 217.74,151.28 218.22,153.15 218.71,155.05 219.20,156.97 219.69,158.91 220.17,160.85 220.66,162.81 221.15,164.77 221.64,166.74 222.12,168.71 222.61,170.68 223.10,172.64 223.59,174.60 224.08,176.54 224.56,178.47 225.05,180.38 225.54,182.27 226.03,184.14 226.51,185.99 227.00,187.80 227.49,189.58 227.97,191.33 228.46,193.04 228.95,194.72 229.44,196.35 229.92,197.93 230.41,199.47 230.90,200.96 231.39,202.40 231.88,203.78 232.36,205.11 232.85,206.38 233.34,207.59 233.83,208.74 234.31,209.82 234.80,210.84 235.29,211.79 235.77,212.67 236.26,213.48 236.75,214.23 237.24,214.90 237.72,215.49 238.21,216.01 238.70,216.46 239.19,216.83 239.67,217.13 240.16,217.35 240.65,217.49 241.14,217.55 241.62,217.54 242.11,217.45 242.60,217.28 243.09,217.04 243.58,216.72 244.06,216.32 244.55,215.85 245.04,215.30 245.53,214.68 246.01,213.99 246.50,213.22 246.99,212.38 247.47,211.48 247.96,210.51 248.45,209.47 248.94,208.36 249.42,207.19 249.91,205.96 250.40,204.67 250.89,203.33 251.38,201.93 251.86,200.47 252.35,198.96 252.84,197.41 253.33,195.81 253.81,194.16 254.30,192.48 254.79,190.75 255.28,188.99 255.76,187.20 256.25,185.37 256.74,183.52 257.22,181.65 257.71,179.75 258.20,177.83 258.69,175.89 259.17,173.95 259.66,171.99 260.15,170.03 260.64,168.06 261.12,166.09 261.61,164.12 262.10,162.16 262.59,160.20 263.08,158.26 263.56,156.33 264.05,154.42 264.54,152.53 265.02,150.66 265.51,148.81 266.00,147.00 266.49,145.22 266.97,143.47 267.46,141.76 267.95,140.08 268.44,138.45 268.92,136.87 269.41,135.33 269.90,133.84 270.39,132.40 270.88,131.02 271.36,129.69 271.85,128.42 272.34,127.21 272.83,126.06 273.31,124.98 273.80,123.96 274.29,123.01 274.78,122.13 275.26,121.32 275.75,120.57 276.24,119.90 276.72,119.31 277.21,118.79 277.70,118.34 278.19,117.97 278.67,117.67 279.16,117.45 279.65,117.31 280.14,117.25 280.62,117.26 281.11,117.35 281.60,117.52 282.09,117.76 282.58,118.08 283.06,118.48 283.55,118.95 284.04,119.50 284.53,120.12 285.01,120.81 285.50,121.58 285.99,122.42 286.47,123.32 286.96,124.29 287.45,125.33 287.94,126.44 288.42,127.61 288.91,128.84 289.40,130.13 289.89,131.47 290.38,132.87 290.86,134.33 291.35,135.84 291.84,137.39 292.33,138.99 292.81,140.64 293.30,142.32 293.79,144.05 294.27,145.81 294.76,147.60 295.25,149.43 295.74,151.28 296.22,153.15 296.71,155.05 297.20,156.97 297.69,158.91 298.17,160.85 298.66,162.81 299.15,164.77 299.64,166.74 300.12,168.71 300.61,170.68 301.10,172.64 301.59,174.60 302.08,176.54 302.56,178.47 303.05,180.38 303.54,182.27 304.03,184.14 304.51,185.99 305.00,187.80 305.49,189.58 305.97,191.33 306.46,193.04 306.95,194.72 307.44,196.35 307.92,197.93 308.41,199.47 308.90,200.96 309.39,202.40 309.88,203.78 310.36,205.11 310.85,206.38 311.34,207.59 311.83,208.74 312.31,209.82 312.80,210.84 313.29,211.79 313.78,212.67 314.26,213.48 314.75,214.23 315.24,214.90 315.72,215.49 316.21,216.01 316.70,216.46 317.19,216.83 317.67,217.13 318.16,217.35 318.65,217.49 319.14,217.55 319.62,217.54 320.11,217.45 320.60,217.28 321.09,217.04 321.58,216.72 322.06,216.32 322.55,215.85 323.04,215.30 323.52,214.68 324.01,213.99 324.50,213.22 324.99,212.38 325.47,211.48 325.96,210.51 326.45,209.47 326.94,208.36 327.42,207.19 327.91,205.96 328.40,204.67 328.89,203.33 329.38,201.93 329.86,200.47 330.35,198.96 330.84,197.41 331.33,195.81 331.81,194.16 332.30,192.48 332.79,190.75 333.27,188.99 333.76,187.20 334.25,185.37 334.74,183.52 335.22,181.65 335.71,179.75 336.20,177.83 336.69,175.89 337.17,173.95 337.66,171.99 338.15,170.03 338.64,168.06 339.12,166.09 339.61,164.12 340.10,162.16 340.59,160.20 341.08,158.26 341.56,156.33 342.05,154.42 342.54,152.53 343.03,150.66 343.51,148.81 344.00,147.00 344.49,145.22 344.97,143.47 345.46,141.76 345.95,140.08 346.44,138.45 346.92,136.87 347.41,135.33 347.90,133.84 348.39,132.40 348.88,131.02 349.36,129.69 349.85,128.42 350.34,127.21 350.82,126.06 351.31,124.98 351.80,123.96 352.29,123.01 352.78,122.13 353.26,121.32 353.75,120.57 354.24,119.90 354.72,119.31 355.21,118.79 355.70,118.34 356.19,117.97 356.67,117.67 357.16,117.45 357.65,117.31 358.14,117.25 358.62,117.26 359.11,117.35 359.60,117.52 360.09,117.76 360.58,118.08 361.06,118.48 361.55,118.95 362.04,119.50 362.53,120.12 363.01,120.81 363.50,121.58 363.99,122.42 364.47,123.32 364.96,124.29 365.45,125.33 365.94,126.44 366.42,127.61 366.91,128.84 367.40,130.13 367.89,131.47 368.38,132.87 368.86,134.33 369.35,135.84 369.84,137.39 370.33,138.99 370.81,140.64 371.30,142.32 371.79,144.05 372.27,145.81 372.76,147.60 373.25,149.43 373.74,151.28 374.22,153.15 374.71,155.05 375.20,156.97 375.69,158.91 376.17,160.85 376.66,162.81 377.15,164.77 377.64,166.74 378.12,168.71 378.61,170.68 379.10,172.64 379.59,174.60 380.07,176.54 380.56,178.47 381.05,180.38 381.54,182.27 382.02,184.14 382.51,185.99 383.00,187.80 383.49,189.58 383.97,191.33 384.46,193.04 384.95,194.72 385.44,196.35 385.92,197.93 386.41,199.47 386.90,200.96 387.39,202.40 387.88,203.78 388.36,205.11 388.85,206.38 389.34,207.59 389.83,208.74 390.31,209.82 390.80,210.84 391.29,211.79 391.78,212.67 392.26,213.48 392.75,214.23 393.24,214.90 393.72,215.49 394.21,216.01 394.70,216.46 395.19,216.83 395.67,217.13 396.16,217.35 396.65,217.49 397.14,217.55 397.62,217.54 398.11,217.45 398.60,217.28 399.09,217.04 399.57,216.72 400.06,216.32 400.55,215.85 401.04,215.30 401.53,214.68 402.01,213.99 402.50,213.22 402.99,212.38 403.47,211.48 403.96,210.51 404.45,209.47 404.94,208.36 405.42,207.19 405.91,205.96 406.40,204.67 406.89,203.33 407.38,201.93 407.86,200.47 408.35,198.96 408.84,197.41 409.32,195.81 409.81,194.16 410.30,192.48 410.79,190.75 411.28,188.99 411.76,187.20 412.25,185.37 412.74,183.52 413.22,181.65 413.71,179.75 414.20,177.83 414.69,175.89 415.17,173.95 415.66,171.99 416.15,170.03 416.64,168.06 417.12,166.09 417.61,164.12 418.10,162.16 418.59,160.20 419.07,158.26 419.56,156.33 420.05,154.42 420.54,152.53 421.03,150.66 421.51,148.81 422.00,147.00 422.49,145.22 422.97,143.47 423.46,141.76 423.95,140.08 424.44,138.45 424.92,136.87 425.41,135.33 425.90,133.84 426.39,132.40 426.88,131.02 427.36,129.69 427.85,128.42 428.34,127.21 428.82,126.06 429.31,124.98 429.80,123.96 430.29,123.01 430.77,122.13 431.26,121.32 431.75,120.57 432.24,119.90 432.72,119.31 433.21,118.79 433.70,118.34 434.19,117.97 434.67,117.67 435.16,117.45 435.65,117.31 436.14,117.25 436.62,117.26 437.11,117.35 437.60,117.52 438.09,117.76 438.57,118.08 439.06,118.48 439.55,118.95 440.04,119.50 440.52,120.12 441.01,120.81 441.50,121.58 441.99,122.42 442.47,123.32 442.96,124.29 443.45,125.33 443.94,126.44 444.42,127.61 444.91,128.84 445.40,130.13 445.89,131.47 446.38,132.87 446.86,134.33 447.35,135.84 447.84,137.39 448.33,138.99 448.81,140.64 449.30,142.32 449.79,144.05 450.28,145.81 450.76,147.60 451.25,149.43 451.74,151.28 452.22,153.15 452.71,155.05 453.20,156.97 453.69,158.91 454.17,160.85 454.66,162.81 455.15,164.77 455.64,166.74 456.12,168.71 456.61,170.68 457.10,172.64 457.59,174.60 458.08,176.54 458.56,178.47 459.05,180.38 459.54,182.27 460.03,184.14 460.51,185.99 461.00,187.80 461.49,189.58 461.97,191.33 462.46,193.04 462.95,194.72 463.44,196.35 463.92,197.93 464.41,199.47 464.90,200.96 465.39,202.40 465.88,203.78 466.36,205.11 466.85,206.38 467.34,207.59 467.83,208.74 468.31,209.82 468.80,210.84" fill="none" stroke="#2E8B2E" stroke-width="1"/>
<polyline points="78.80,123.96 79.29,124.98 79.77,126.06 80.26,127.21 80.75,128.42 81.24,129.69 81.72,131.02 82.21,132.40 82.70,133.84 83.19,135.33 83.67,136.87 84.16,138.45 84.65,140.08 85.14,141.76 85.62,143.47 86.11,145.22 86.60,147.00 87.09,148.81 87.57,150.66 88.06,152.53 88.55,154.42 89.04,156.33 89.52,158.26 90.01,160.20 90.50,162.16 90.99,164.12 91.47,166.09 91.96,168.06 92.45,170.03 92.94,171.99 93.42,173.95 93.91,175.89 94.40,177.83 94.89,179.75 95.38,181.65 95.86,183.52 96.35,185.37 96.84,187.20 97.32,188.99 97.81,190.75 98.30,192.48 98.79,194.16 99.27,195.81 99.76,197.41 100.25,198.96 100.74,200.47 101.22,201.93 101.71,203.33 102.20,204.67 102.69,205.96 103.17,207.19 103.66,208.36 104.15,209.47 104.64,210.51 105.12,211.48 105.61,212.38 106.10,213.22 106.59,213.99 107.07,214.68 107.56,215.30 108.05,215.85 108.54,216.32 109.02,216.72 109.51,217.04 110.00,217.28 110.49,217.45 110.97,217.54 111.46,217.55 111.95,217.49 112.44,217.35 112.92,217.13 113.41,216.83 113.90,216.46 114.39,216.01 114.88,215.49 115.36,214.90 115.85,214.23 116.34,213.48 116.82,212.67 117.31,211.79 117.80,210.84 118.29,209.82 118.77,208.74 119.26,207.59 119.75,206.38 120.24,205.11 120.72,203.78 121.21,202.40 121.70,200.96 122.19,199.47 122.67,197.93 123.16,196.35 123.65,194.72 124.14,193.04 124.62,191.33 125.11,189.58 125.60,187.80 126.09,185.99 126.57,184.14 127.06,182.27 127.55,180.38 128.04,178.47 128.52,176.54 129.01,174.60 129.50,172.64 129.99,170.68 130.47,168.71 130.96,166.74 131.45,164.77 131.94,162.81 132.42,160.85 132.91,158.91 133.40,156.97 133.89,155.05 134.38,153.15 134.86,151.28 135.35,149.43 135.84,147.60 136.32,145.81 136.81,144.05 137.30,142.32 137.79,140.64 138.27,138.99 138.76,137.39 139.25,135.84 139.74,134.33 140.22,132.87 140.71,131.47 141.20,130.13 141.69,128.84 142.17,127.61 142.66,126.44 143.15,125.33 143.64,124.29 144.12,123.32 144.61,122.42 145.10,121.58 145.59,120.81 146.07,120.12 146.56,119.50 147.05,118.95 147.54,118.48 148.02,118.08 148.51,117.76 149.00,117.52 149.49,117.35 149.97,117.26 150.46,117.25 150.95,117.31 151.44,117.45 151.92,117.67 152.41,117.97 152.90,118.34 153.39,118.79 153.88,119.31 154.36,119.90 154.85,120.57 155.34,121.32 155.83,122.13 156.31,123.01 156.80,123.96 157.29,124.98 157.77,126.06 158.26,127.21 158.75,128.42 159.24,129.69 159.72,131.02 160.21,132.40 160.70,133.84 161.19,135.33 161.67,136.87 162.16,138.45 162.65,140.08 163.14,141.76 163.62,143.47 164.11,145.22 164.60,147.00 165.09,148.81 165.58,150.66 166.06,152.53 166.55,154.42 167.04,156.33 167.52,158.26 168.01,160.20 168.50,162.16 168.99,164.12 169.47,166.09 169.96,168.06 170.45,170.03 170.94,171.99 171.42,173.95 171.91,175.89 172.40,177.83 172.89,179.75 173.38,181.65 173.86,183.52 174.35,185.37 174.84,187.20 175.33,188.99 175.81,190.75 176.30,192.48 176.79,194.16 177.28,195.81 177.76,197.41 178.25,198.96 178.74,200.47 179.22,201.93 179.71,203.33 180.20,204.67 180.69,205.96 181.17,207.19 181.66,208.36 182.15,209.47 182.64,210.51 183.12,211.48 183.61,212.38 184.10,213.22 184.59,213.99 185.08,214.68 185.56,215.30 186.05,215.85 186.54,216.32 187.03,216.72 187.51,217.04 188.00,217.28 188.49,217.45 188.97,217.54 189.46,217.55 189.95,217.49 190.44,217.35 190.92,217.13 191.41,216.83 191.90,216.46 192.39,216.01 192.88,215.49 193.36,214.90 193.85,214.23 194.34,213.48 194.83,212.67 195.31,211.79 195.80,210.84 196.29,209.82 196.77,208.74 197.26,207.59 197.75,206.38 198.24,205.11 198.72,203.78 199.21,202.40 199.70,200.96 200.19,199.47 200.67,197.93 201.16,196.35 201.65,194.72 202.14,193.04 202.62,191.33 203.11,189.58 203.60,187.80 204.09,185.99 204.58,184.14 205.06,182.27 205.55,180.38 206.04,178.47 206.52,176.54 207.01,174.60 207.50,172.64 207.99,170.68 208.47,168.71 208.96,166.74 209.45,164.77 209.94,162.81 210.42,160.85 210.91,158.91 211.40,156.97 211.89,155.05 212.38,153.15 212.86,151.28 213.35,149.43 213.84,147.60 214.33,145.81 214.81,144.05 215.30,142.32 215.79,140.64 216.28,138.99 216.76,137.39 217.25,135.84 217.74,134.33 218.22,132.87 218.71,131.47 219.20,130.13 219.69,128.84 220.17,127.61 220.66,126.44 221.15,125.33 221.64,124.29 222.12,123.32 222.61,122.42 223.10,121.58 223.59,120.81 224.08,120.12 224.56,119.50 225.05,118.95 225.54,118.48 226.03,118.08 226.51,117.76 227.00,117.52 227.49,117.35 227.97,117.26 228.46,117.25 228.95,117.31 229.44,117.45 229.92,117.67 230.41,117.97 230.90,118.34 231.39,118.79 231.88,119.31 232.36,119.90 232.85,120.57 233.34,121.32 233.83,122.13 234.31,123.01 234.80,123.96 235.29,124.98 235.77,126.06 236.26,127.21 236.75,128.42 237.24,129.69 237.72,131.02 238.21,132.40 238.70,133.84 239.19,135.33 239.67,136.87 240.16,138.45 240.65,140.08 241.14,141.76 241.62,143.47 242.11,145.22 242.60,147.00 243.09,148.81 243.58,150.66 244.06,152.53 244.55,154.42 245.04,156.33 245.53,158.26 246.01,160.20 246.50,162.16 246.99,164.12 247.47,166.09 247.96,168.06 248.45,170.03 248.94,171.99 249.42,173.95 249.91,175.89 250.40,177.83 250.89,179.75 251.38,181.65 251.86,183.52 252.35,185.37 252.84,187.20 253.33,188.99 253.81,190.75 254.30,192.48 254.79,194.16 255.28,195.81 255.76,197.41 256.25,198.96 256.74,200.47 257.22,201.93 257.71,203.33 258.20,204.67 258.69,205.96 259.17,207.19 259.66,208.36 260.15,209.47 260.64,210.51 261.12,211.48 261.61,212.38 262.10,213.22 262.59,213.99 263.08,214.68 263.56,215.30 264.05,215.85 264.54,216.32 265.02,216.72 265.51,217.04 266.00,217.28 266.49,217.45 266.97,217.54 267.46,217.55 267.95,217.49 268.44,217.35 268.92,217.13 269.41,216.83 269.90,216.46 270.39,216.01 270.88,215.49 271.36,214.90 271.85,214.23 272.34,213.48 272.83,212.67 273.31,211.79 273.80,210.84 274.29,209.82 274.78,208.74 275.26,207.59 275.75,206.38 276.24,205.11 276.72,203.78 277.21,202.40 277.70,200.96 278.19,199.47 278.67,197.93 279.16,196.35 279.65,194.72 280.14,193.04 280.62,191.33 281.11,189.58 281.60,187.80 282.09,185.99 282.58,184.14 283.06,182.27 283.55,180.38 284.04,178.47 284.53,176.54 285.01,174.60 285.50,172.64 285.99,170.68 286.47,168.71 286.96,166.74 287.45,164.77 287.94,162.81 288.42,160.85 288.91,158.91 289.40,156.97 289.89,155.05 290.38,153.15 290.86,151.28 291.35,149.43 291.84,147.60 292.33,145.81 292.81,144.05 293.30,142.32 293.79,140.64 294.27,138.99 294.76,137.39 295.25,135.84 295.74,134.33 296.22,132.87 296.71,131.47 297.20,130.13 297.69,128.84 298.17,127.61 298.66,126.44 299.15,125.33 299.64,124.29 300.12,123.32 300.61,122.42 301.10,121.58 301.59,120.81 302.08,120.12 302.56,119.50 303.05,118.95 303.54,118.48 304.03,118.08 304.51,117.76 305.00,117.52 305.49,117.35 305.97,117.26 306.46,117.25 306.95,117.31 307.44,117.45 307.92,117.67 308.41,117.97 308.90,118.34 309.39,118.79 309.88,119.31 310.36,119.90 310.85,120.57 311.34,121.32 311.83,122.13 312.31,123.01 312.80,123.96 313.29,124.98 313.78,126.06 314.26,127.21 314.75,128.42 315.24,129.69 315.72,131.02 316.21,132.40 316.70,133.84 317.19,135.33 317.67,136.87 318.16,138.45 318.65,140.08 319.14,141.76 319.62,143.47 320.11,145.22 320.60,147.00 321.09,148.81 321.58,150.66 322.06,152.53 322.55,154.42 323.04,156.33 323.52,158.26 324.01,160.20 324.50,162.16 324.99,164.12 325.47,166.09 325.96,168.06 326.45,170.03 326.94,171.99 327.42,173.95 327.91,175.89 328.40,177.83 328.89,179.75 329.38,181.65 329.86,183.52 330.35,185.37 330.84,187.20 331.33,188.99 331.81,190.75 332.30,192.48 332.79,194.16 333.27,195.81 333.76,197.41 334.25,198.96 334.74,200.47 335.22,201.93 335.71,203.33 336.20,204.67 336.69,205.96 337.17,207.19 337.66,208.36 338.15,209.47 338.64,210.51 339.12,211.48 339.61,212.38 340.10,213.22 340.59,213.99 341.08,214.68 341.56,215.30 342.05,215.85 342.54,216.32 343.03,216.72 343.51,217.04 344.00,217.28 344.49,217.45 344.97,217.54 345.46,217.55 345.95,217.49 346.44,217.35 346.92,217.13 347.41,216.83 347.90,216.46 348.39,216.01 348.88,215.49 349.36,214.90 349.85,214.23 350.34,213.48 350.82,212.67 351.31,211.79 351.80,210.84 352.29,209.82 352.78,208.74 353.26,207.59 353.75,206.38 354.24,205.11 354.72,203.78 355.21,202.40 355.70,200.96 356.19,199.47 356.67,197.93 357.16,196.35 357.65,194.72 358.14,193.04 358.62,191.33 359.11,189.58 359.60,187.80 360.09,185.99 360.58,184.14 361.06,182.27 361.55,180.38 362.04,178.47 362.53,176.54 363.01,174.60 363.50,172.64 363.99,170.68 364.47,168.71 364.96,166.74 365.45,164.77 365.94,162.81 366.42,160.85 366.91,158.91 367.40,156.97 367.89,155.05 368.38,153.15 368.86,151.28 369.35,149.43 369.84,147.60 370.33,145.81 370.81,144.05 371.30,142.32 371.79,140.64 372.27,138.99 372.76,137.39 373.25,135.84 373.74,134.33 374.22,132.87 374.71,131.47 375.20,130.13 375.69,128.84 376.17,127.61 376.66,126.44 377.15,125.33 377.64,124.29 378.12,123.32 378.61,122.42 379.10,121.58 379.59,120.81 380.07,120.12 380.56,119.50 381.05,118.95 381.54,118.48 382.02,118.08 382.51,117.76 383.00,117.52 383.49,117.35 383.97,117.26 384.46,117.25 384.95,117.31 385.44,117.45 385.92,117.67 386.41,117.97 386.90,118.34 387.39,118.79 387.88,119.31 388.36,119.90 388.85,120.57 389.34,121.32 389.83,122.13 390.31,123.01 390.80,123.96 391.29,124.98 391.78,126.06 392.26,127.21 392.75,128.42 393.24,129.69 393.72,131.02 394.21,132.40 394.70,133.84 395.19,135.33 395.67,136.87 396.16,138.45 396.65,140.08 397.14,141.76 397.62,143.47 398.11,145.22 398.60,147.00 399.09,148.81 399.57,150.66 400.06,152.53 400.55,154.42 401.04,156.33 401.53,158.26 402.01,160.20 402.50,162.16 402.99,164.12 403.47,166.09 403.96,168.06 404.45,170.03 404.94,171.99 405.42,173.95 405.91,175.89 406.40,177.83 406.89,179.75 407.38,181.65 407.86,183.52 408.35,185.37 408.84,187.20 409.32,188.99 409.81,190.75 410.30,192.48 410.79,194.16 411.28,195.81 411.76,197.41 412.25,198.96 412.74,200.47 413.22,201.93 413.71,203.33 414.20,204.67 414.69,205.96 415.17,207.19 415.66,208.36 416.15,209.47 416.64,210.51 417.12,211.48 417.61,212.38 418.10,213.22 418.59,213.99 419.07,214.68 419.56,215.30 420.05,215.85 420.54,216.32 421.03,216.72 421.51,217.04 422.00,217.28 422.49,217.45 422.97,217.54 423.46,217.55 423.95,217.49 424.44,217.35 424.92,217.13 425.41,216.83 425.90,216.46 426.39,216.01 426.88,215.49 427.36,214.90 427.85,214.23 428.34,213.48 428.82,212.67 429.31,211.79 429.80,210.84 430.29,209.82 430.77,208.74 431.26,207.59 431.75,206.38 432.24,205.11 432.72,203.78 433.21,202.40 433.70,200.96 434.19,199.47 434.67,197.93 435.16,196.35 435.65,194.72 436.14,193.04 436.62,191.33 437.11,189.58 437.60,187.80 438.09,185.99 438.57,184.14 439.06,182.27 439.55,180.38 440.04,178.47 440.52,176.54 441.01,174.60 441.50,172.64 441.99,170.68 442.47,168.71 442.96,166.74 443.45,164.77 443.94,162.81 444.42,160.85 444.91,158.91 445.40,156.97 445.89,155.05 446.38,153.15 446.86,151.28 447.35,149.43 447.84,147.60 448.33,145.81 448.81,144.05 449.30,142.32 449.79,140.64 450.28,138.99 450.76,137.39 451.25,135.84 451.74,134.33 452.22,132.87 452.71,131.47 453.20,130.13 453.69,128.84 454.17,127.61 454.66,126.44 455.15,125.33 455.64,124.29 456.12,123.32 456.61,122.42 457.10,121.58 457.59,120.81 458.08,120.12 458.56,119.50 459.05,118.95 459.54,118.48 460.03,118.08 460.51,117.76 461.00,117.52 461.49,117.35 461.97,117.26 462.46,117.25 462.95,117.31 463.44,117.45 463.92,117.67 464.41,117.97 464.90,118.34 465.39,118.79 465.88,119.31 466.36,119.90 466.85,120.57 467.34,121.32 467.83,122.13 468.31,123.01 468.80,123.96" fill="none" stroke="#FF3333" stroke-width="1"/>
<path d="M78.79999999999995 111.5 V222 H469" stroke="#000" stroke-width="1.8" fill="none"/>
<path d="M78.8 220.6 h4.5 M78.8 211.7 h4.5 M78.8 202.9 h4.5 M78.8 194.0 h4.5 M78.8 185.1 h4.5 M78.8 176.3 h4.5 M78.8 167.4 h4.5 M78.8 158.5 h4.5 M78.8 149.7 h4.5 M78.8 140.8 h4.5 M78.8 131.9 h4.5 M78.8 123.1 h4.5 M78.8 114.2 h4.5 M117.8 222 v-5 M156.8 222 v-5 M195.8 222 v-5 M234.8 222 v-5 M273.8 222 v-5 M312.8 222 v-5 M351.8 222 v-5 M390.8 222 v-5 M429.8 222 v-5 M468.8 222 v-5" stroke="#000" stroke-width="1.3"/>
<text x="74" y="223.9" text-anchor="end" fill="#111" >-150.000</text>
<text x="74" y="215.0" text-anchor="end" fill="#111" >-125.000</text>
<text x="74" y="206.2" text-anchor="end" fill="#111" >-100.000</text>
<text x="74" y="197.3" text-anchor="end" fill="#111" >-75.000</text>
<text x="74" y="188.4" text-anchor="end" fill="#111" >-50.000</text>
<text x="74" y="179.6" text-anchor="end" fill="#111" >-25.000</text>
<text x="74" y="170.7" text-anchor="end" fill="#111" >0.000</text>
<text x="74" y="161.8" text-anchor="end" fill="#111" >25.000</text>
<text x="74" y="153.0" text-anchor="end" fill="#111" >50.000</text>
<text x="74" y="144.1" text-anchor="end" fill="#111" >75.000</text>
<text x="74" y="135.2" text-anchor="end" fill="#111" >100.000</text>
<text x="74" y="126.4" text-anchor="end" fill="#111" >125.000</text>
<text x="74" y="117.5" text-anchor="end" fill="#111" >150.000</text>
<text x="78.8" y="233" text-anchor="middle" fill="#222">0</text>
<text x="117.8" y="233" text-anchor="middle" fill="#222">0.01</text>
<text x="156.8" y="233" text-anchor="middle" fill="#222">0.02</text>
<text x="195.8" y="233" text-anchor="middle" fill="#222">0.03</text>
<text x="234.8" y="233" text-anchor="middle" fill="#222">0.04</text>
<text x="273.8" y="233" text-anchor="middle" fill="#222">0.05</text>
<text x="312.8" y="233" text-anchor="middle" fill="#222">0.06</text>
<text x="351.8" y="233" text-anchor="middle" fill="#222">0.07</text>
<text x="390.8" y="233" text-anchor="middle" fill="#222">0.08</text>
<text x="429.8" y="233" text-anchor="middle" fill="#222">0.09</text>
<text x="468.8" y="233" text-anchor="middle" fill="#222">0.1</text>
<text x="273" y="247" text-anchor="middle" fill="#222">Time / s</text>
<text transform="translate(19.5,166) rotate(-90)" text-anchor="middle" fill="#222">Voltage / V</text>
<path d="M495 135.8 H524" stroke="#FF00FF" stroke-width="1.2"/>
<text x="530.5" y="138.1" font-family="Liberation Sans" font-size="10.5" fill="#111">C1</text>
<path d="M495 154.9 H524" stroke="#00EE00" stroke-width="1.2"/>
<text x="530.5" y="157.2" font-family="Liberation Sans" font-size="10.5" fill="#111">C2</text>
<path d="M495 174.0 H524" stroke="#0000FF" stroke-width="1.2"/>
<text x="530.5" y="176.3" font-family="Liberation Sans" font-size="10.5" fill="#111">UA</text>
<path d="M495 193.1 H524" stroke="#008000" stroke-width="1.2"/>
<text x="530.5" y="195.4" font-family="Liberation Sans" font-size="10.5" fill="#111">UB</text>
<path d="M495 212.2 H524" stroke="#FF0000" stroke-width="1.2"/>
<text x="530.5" y="214.5" font-family="Liberation Sans" font-size="10.5" fill="#111">UC</text>
<text x="270" y="268.5" text-anchor="middle" fill="#222">Current</text>
<path d="M72.0 275.8 H469.0 M72.0 284.9 H469.0 M72.0 293.9 H469.0 M111.0 273 V298 M150.8 273 V298 M190.6 273 V298 M230.4 273 V298 M270.2 273 V298 M310.0 273 V298 M349.8 273 V298 M389.6 273 V298 M429.4 273 V298 M469.2 273 V298" stroke="#888" stroke-width="0.9" stroke-dasharray="1,2.2"/>
<path d="M71.20000000000005 274 V298" stroke="#000" stroke-width="1.8"/>
<path d="M71.20000000000005 275.8 h4.5 M71.20000000000005 284.9 h4.5 M71.20000000000005 293.9 h4.5" stroke="#000" stroke-width="1.3"/>
<text x="66" y="279.1" text-anchor="end" fill="#111">1.500</text>
<text x="66" y="288.2" text-anchor="end" fill="#111">1.250</text>
<text x="66" y="297.2" text-anchor="end" fill="#111">1.000</text>
<path d="M496 297.29999999999995 H524" stroke="#FFA8FF" stroke-width="1.2"/>
<text x="533" y="302" font-family="Liberation Sans" font-size="10.5" fill="#555">C1</text>
</svg>
<div class="red" style="left:895px;top:496px">Time Signal View</div>
<div class="a" style="left:1424px;top:436px;width:5px;height:137px;background:#C8C8C8;border-radius:3px"></div>
<div class="a" style="left:0;top:724px;width:1439px;height:40px;background:#0E508D"></div>
<div class="t b" style="left:593px;top:743px;font-size:11px;color:#fff">BI</div>
<div class="t b" style="left:734px;top:743px;font-size:11px;color:#fff">BO</div>
<svg class="a" style="left:560px;top:721px" width="300" height="44"><g fill="none" stroke="#D8DEE8" stroke-width="1.5"><circle cx="53.0" cy="30" r="3.3"/><path d="M55.3 27.6 L62.0 21.5"/><circle cx="76.5" cy="30" r="3.3"/><path d="M78.8 27.6 L85.5 21.5"/><circle cx="100.0" cy="30" r="3.3"/><path d="M102.3 27.6 L109.0 21.5"/><circle cx="123.5" cy="30" r="3.3"/><path d="M125.8 27.6 L132.5 21.5"/><circle cx="199.5" cy="30" r="3.3"/><path d="M201.8 27.6 L208.5 21.5"/><circle cx="223.0" cy="30" r="3.3"/><path d="M225.3 27.6 L232.0 21.5"/><circle cx="246.5" cy="30" r="3.3"/><path d="M248.8 27.6 L255.5 21.5"/><circle cx="270.0" cy="30" r="3.3"/><path d="M272.3 27.6 L279.0 21.5"/></g></svg>
<svg class="a" style="left:1090px;top:738px" width="60" height="22">
<g fill="#fff"><rect x="6" y="3" width="5" height="2"/><rect x="16" y="3" width="4.5" height="2"/></g>
<rect x="6" y="6.6" width="15.2" height="11.6" fill="none" stroke="#fff" stroke-width="1.8"/>
<path d="M7.5 11 H12 M9.7 8.8 V13.2 M14 11 H19" stroke="#fff" stroke-width="1.6"/>
<path d="M29.3 7 V14" stroke="#fff" stroke-width="1"/>
<g fill="none" stroke="#D8E0EE" stroke-width="1.1"><circle cx="44.6" cy="10.5" r="6"/><circle cx="44.6" cy="10.5" r="3"/><path d="M44.6 3.5 V17.5 M37.6 10.5 H51.6"/></g>
</svg>
<div class="t b" style="left:1144px;top:744px;font-size:10.5px;color:#fff;letter-spacing:-0.2px">GPS SSM</div>
<svg class="a" style="left:1413px;top:741px" width="16" height="16">
<g fill="none" stroke="#C8D4E6" stroke-width="1.3"><circle cx="8" cy="7.5" r="6"/><ellipse cx="8" cy="7.5" rx="2.6" ry="6"/><path d="M2 7.5 H14 M3 4.5 H13 M3 10.5 H13"/></g>
<path d="M2.3 5.5 L9.5 13.5 M9.5 5.5 L2.3 13.5" stroke="#E85858" stroke-width="1.6"/></svg>
</body></html>
